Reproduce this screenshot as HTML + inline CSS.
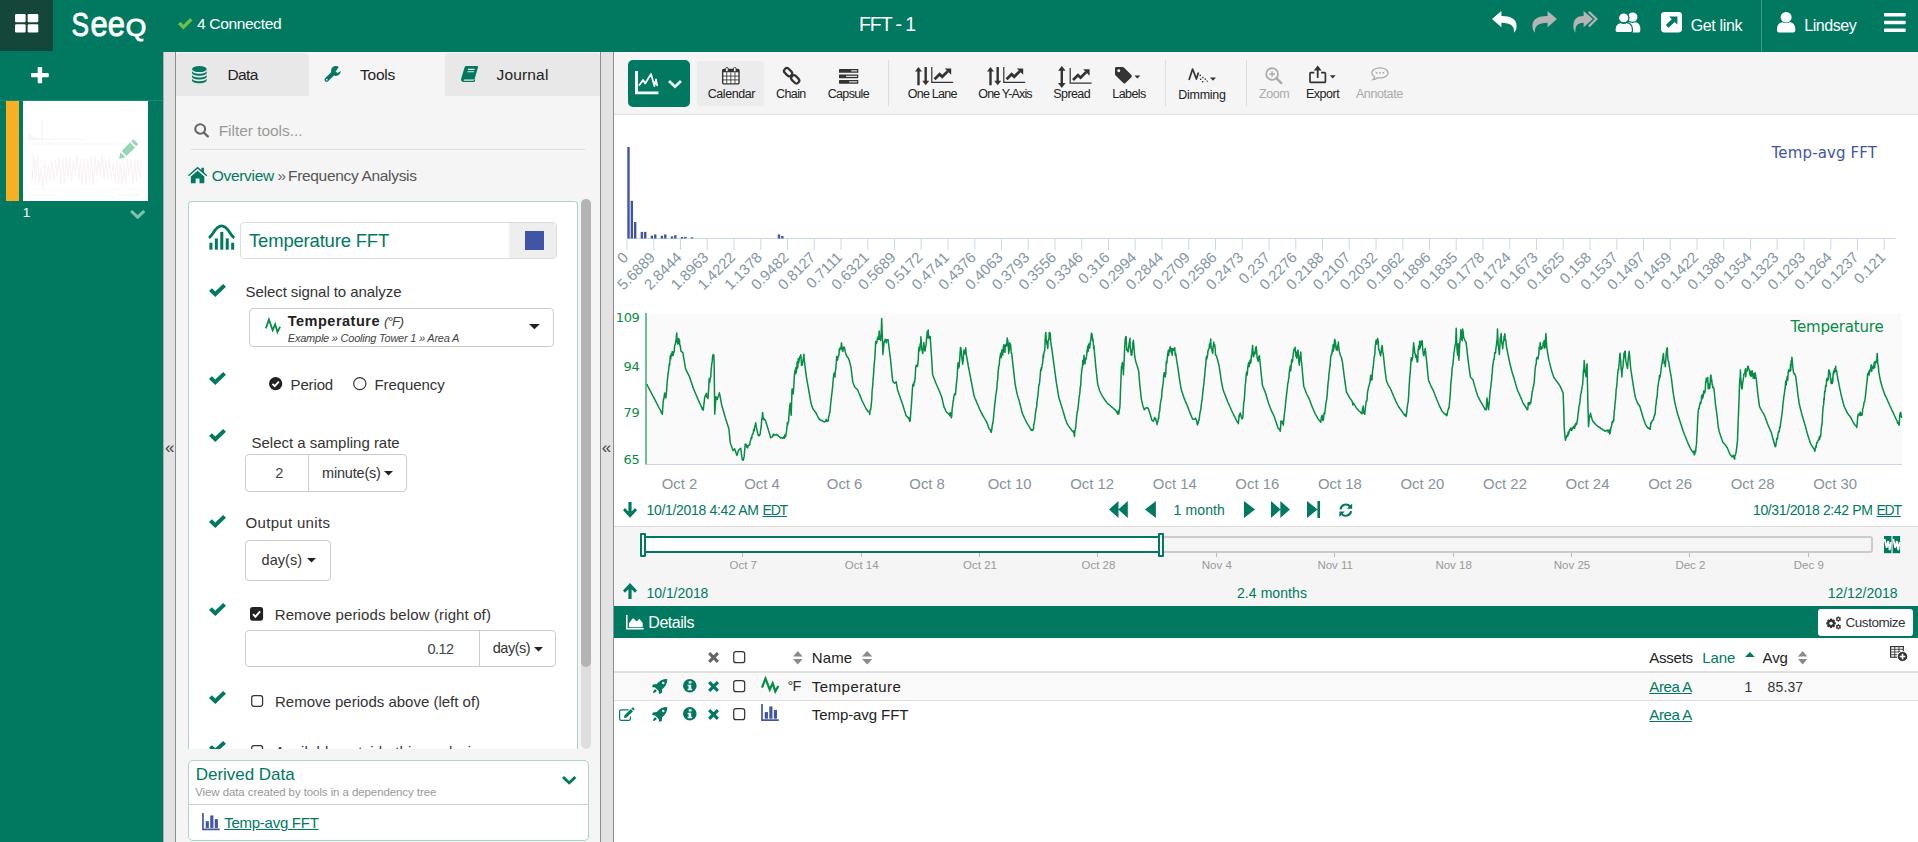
<!DOCTYPE html>
<html lang="en"><head><meta charset="utf-8"><title>FFT - 1</title>
<style>
html,body{margin:0;padding:0;background:#fff;}
body{width:1918px;height:842px;overflow:hidden;position:relative;font-family:"Liberation Sans",sans-serif;}
.b{position:absolute;box-sizing:border-box;display:block;}
.t{position:absolute;line-height:1;white-space:nowrap;display:block;}
a.t{text-decoration:underline;}
svg{overflow:visible;}
</style></head><body>
<header>
<div class="b " style="left:0px;top:0px;width:1918px;height:52px;background:#007960;"></div>
<div class="b " style="left:0px;top:0px;width:53px;height:51px;background:#15463a;"></div>
<svg class="b" style="left:14.7px;top:14.2px;" width="23.3" height="18.6" viewBox="0 0 23 19" preserveAspectRatio="none"><g fill="#fff"><rect x="0" y="0" width="10.5" height="8.5" rx="1.3"/><rect x="12.5" y="0" width="10.5" height="8.5" rx="1.3"/><rect x="0" y="10.5" width="10.5" height="8.5" rx="1.3"/><rect x="12.5" y="10.5" width="10.5" height="8.5" rx="1.3"/></g></svg>
<svg class="b" style="left:70px;top:8px" width="84" height="36" viewBox="70 8 84 36" font-family="Liberation Sans, sans-serif" fill="#fff" stroke="#fff" stroke-width=".9"><text x="71.5" y="36" font-size="33" textLength="17.5" lengthAdjust="spacingAndGlyphs">S</text><text x="90.5" y="36" font-size="35" textLength="34.5" lengthAdjust="spacingAndGlyphs">ee</text><text x="125.8" y="36.3" font-size="23.5" textLength="20.5" lengthAdjust="spacingAndGlyphs">Q</text></svg>
<svg class="b" style="left:178.3px;top:17.6px;" width="14.6" height="11.6" viewBox="0 0 16 13" preserveAspectRatio="none"><path fill="#6cc04a" d="M0,7 L2.7,4.300 L5.9,7.500 L13.3,0.100 L16,2.800 L5.9,12.900 Z"/></svg>
<span class="t " style="font-size:15.5px;color:#fff;letter-spacing:-0.33px;left:197.0px;top:16.1px;">4 Connected</span>
<span class="t " style="font-size:19.5px;color:#fff;letter-spacing:-1.08px;left:859.0px;top:14.5px;">FFT - 1</span>
<svg class="b" style="left:1492.3px;top:11.0px;" width="25.0" height="21.7" viewBox="0 0 25 22" preserveAspectRatio="none"><path fill="#fff" d="M0,8 L9.4,0 V5 C19,5 24.6,8 24.6,15.4 C24.6,18.4 23,21 22,22 C22.6,15.4 19,12 9.4,12 V16.6z"/></svg>
<svg class="b" style="left:1532.3px;top:11.0px;" width="25.0" height="21.7" viewBox="0 0 25 22" preserveAspectRatio="none"><path fill="#b5b5b5" transform="translate(25,0) scale(-1,1)" d="M0,8 L9.4,0 V5 C19,5 24.6,8 24.6,15.4 C24.6,18.4 23,21 22,22 C22.6,15.4 19,12 9.4,12 V16.6z"/></svg>
<svg class="b" style="left:1572.7px;top:11.0px;" width="25.0" height="21.7" viewBox="0 0 25 22" preserveAspectRatio="none"><g fill="#b5b5b5"><path transform="translate(20,0) scale(-1,1)" d="M0,8 L9.4,0 V5 C16,5 19.6,8 19.6,15.4 C19.6,18.4 18.4,21 17.6,22 C18,15.4 16,12 9.4,12 V16.6z"/><path d="M16.6,0 L25,8 L16.6,16.6 L15,15 L21.8,8 L15,1.6z"/></g></svg>
<svg class="b" style="left:1614.5px;top:11.7px;" width="25.3" height="20.6" viewBox="0 0 25 21" preserveAspectRatio="none"><g fill="#fff"><circle cx="17.4" cy="5.2" r="4.8"/><path d="M10,21 v-4.5 c0,-3.6 2.6,-6 5,-6 c1,.8 3.6,.8 4.8,0 c2.6,0 5.2,2.4 5.2,6 V19 a2,2 0 0 1 -2,2z"/></g><g fill="#fff" stroke="#007960" stroke-width="1.3"><circle cx="8.6" cy="6" r="5.2"/><path d="M0,21 v-3.6 c0,-4 2.8,-6.6 5.6,-6.6 c1.4,1 4.6,1 6,0 c2.8,0 5.6,2.6 5.6,6.6 V19 a2,2 0 0 1 -2,2 H2 a2,2 0 0 1 -2,-2z"/></g></svg>
<svg class="b" style="left:1660.7px;top:12.3px;" width="21.0" height="20.4" viewBox="0 0 21 21" preserveAspectRatio="none"><rect x="0" y="0" width="21" height="21" rx="3.6" fill="#fff"/><path fill="#007960" d="M8,4.6 H16.4 V13 L13.6,10.2 L7.6,16.2 L4.8,13.4 L10.8,7.4z"/></svg>
<span class="t " style="font-size:16px;color:#fff;letter-spacing:-0.33px;left:1690.7px;top:18.2px;">Get link</span>
<div class="b " style="left:1761px;top:0px;width:1px;height:52px;background:#3d9a85;"></div>
<svg class="b" style="left:1776.7px;top:12.3px;" width="18.3" height="20.4" viewBox="0 0 18 21" preserveAspectRatio="none"><g fill="#fff"><circle cx="9" cy="5.4" r="5.4"/><path d="M0,21 v-3.4 c0,-4.4 2.6,-7 5.6,-7 c1.6,1.2 5.2,1.2 6.8,0 c3,0 5.6,2.6 5.6,7 V19 a2,2 0 0 1 -2,2 H2 a2,2 0 0 1 -2,-2z"/></g></svg>
<span class="t " style="font-size:16px;color:#fff;letter-spacing:-0.45px;left:1804.2px;top:18.2px;">Lindsey</span>
<svg class="b" style="left:1883.7px;top:12.7px;" width="21.7" height="19.0" viewBox="0 0 22 19" preserveAspectRatio="none"><g fill="#fff"><rect x="0" y="0" width="22" height="3.6" rx=".8"/><rect x="0" y="7.7" width="22" height="3.6" rx=".8"/><rect x="0" y="15.4" width="22" height="3.6" rx=".8"/></g></svg>
</header>
<nav>
<div class="b " style="left:0px;top:52px;width:163px;height:790px;background:#007960;"></div>
<svg class="b" style="left:31.0px;top:67.0px;" width="17.8" height="16.3" viewBox="0 0 16 16" preserveAspectRatio="none"><g fill="#fff"><rect x="6" y="0" width="4" height="16" rx="1"/><rect x="0" y="6" width="16" height="4" rx="1"/></g></svg>
<div class="b " style="left:0px;top:100px;width:163px;height:1px;background:#1f8a73;"></div>
<div class="b " style="left:6px;top:101px;width:13px;height:100px;background:#f8b023;"></div>
<div class="b " style="left:23px;top:101px;width:125px;height:100px;background:#fff;"></div>
<svg class="b" style="left:22.8px;top:101px" width="125" height="99" viewBox="0 0 125 99"><g fill="none" opacity=".19"><path d="M5,38.500 H62" stroke="#c9cde6" stroke-width="1"/><path d="M19,38 V19 M6,38 V32 M7.500,38 V33 M9,38 V35 M11,38 V36 M14,38 V36 M32,38 V36" stroke="#aeb6dd" stroke-width="1"/><path d="M4,42.500 H116" stroke="#d9dde3" stroke-width="3" stroke-dasharray="1.200 1.200"/><path d="M9,50 V88 H118" stroke="#e6e6ee" stroke-width="1"/><path d="M9.0,79.4 L10.8,53.9 L12.6,80.0 L14.4,55.0 L16.2,80.7 L18.0,67.0 L19.8,88.4 L21.6,62.1 L23.4,82.3 L25.2,64.1 L27.0,78.7 L28.8,60.0 L30.6,78.8 L32.4,58.7 L34.2,75.5 L36.0,57.1 L37.8,82.7 L39.6,57.1 L41.4,81.4 L43.2,56.2 L45.0,74.6 L46.8,57.4 L48.6,79.9 L50.4,58.1 L52.2,74.3 L54.0,54.4 L55.8,78.7 L57.6,58.9 L59.4,82.8 L61.2,57.8 L63.0,83.2 L64.8,57.7 L66.6,82.0 L68.4,55.2 L70.2,83.4 L72.0,55.6 L73.8,75.0 L75.6,59.0 L77.4,76.2 L79.2,53.1 L81.0,78.4 L82.8,59.7 L84.6,77.0 L86.4,57.0 L88.2,77.9 L90.0,62.1 L91.8,79.9 L93.6,60.8 L95.4,83.0 L97.2,62.7 L99.0,83.3 L100.8,63.5 L102.6,83.9 L104.4,58.9 L106.2,75.6 L108.0,57.4 L109.8,83.6 L111.6,58.9 L113.4,79.7 L115.2,59.2 L117.0,76.1 L118.8,57.7" stroke="#e8b7d0" stroke-width="1"/><path d="M10,94 H32 M94,94 H118 M98,9.500 H114" stroke="#dfe2ea" stroke-width="1.500"/></g></svg>
<svg class="b" style="left:118.8px;top:139.8px;" width="18.5" height="18.8" viewBox="0 0 18 18" preserveAspectRatio="none"><g fill="#96d6b4"><path d="M0,18 L1.500,11.700 L6.300,16.500z"/><path d="M2.600,10.600 L10.800,2.400 L15.600,7.200 L7.400,15.400z"/><path d="M11.900,1.300 L13,.2 a1.400,1.400 0 0 1 2,0 L17.800,3 a1.400,1.400 0 0 1 0,2 L16.700,6.100z"/></g></svg>
<span class="t " style="font-size:13.5px;color:#fff;left:22.8px;top:206.3px;">1</span>
<svg class="b" style="left:130.4px;top:210.0px;" width="15.4" height="9.2" viewBox="0 0 14 9" preserveAspectRatio="none"><path fill="#7cc2ae" d="M0,2 L2,0 L7,5 L12,0 L14,2 L7,9z"/></svg>
</nav>
<aside>
<div class="b " style="left:163px;top:52px;width:13px;height:790px;background:#e3e3e3;border-left:1px solid #adadad;border-right:1px solid #8e8e8e;"></div>
<span class="t " style="font-size:17px;color:#444;left:165.0px;top:439.3px;">«</span>
<div class="b " style="left:176px;top:52px;width:424px;height:790px;background:#f5f5f5;"></div>
<div class="b " style="left:176px;top:53px;width:132.5px;height:43px;background:#e8e8e8;border-radius:4px 4px 0 0;"></div>
<div class="b " style="left:445px;top:53px;width:154.5px;height:43px;background:#e8e8e8;border-radius:4px 4px 0 0;"></div>
<svg class="b" style="left:192.0px;top:65.8px;" width="14.7" height="16.2" viewBox="0 0 14 16" preserveAspectRatio="none"><g fill="#007960"><ellipse cx="7" cy="3" rx="7" ry="3"/><path d="M0,4.6 v2 c0,1.7 3.1,3 7,3 s7,-1.3 7,-3 v-2 c0,1.7 -3.1,3 -7,3 s-7,-1.3 -7,-3z"/><path d="M0,8.3 v2 c0,1.7 3.1,3 7,3 s7,-1.3 7,-3 v-2 c0,1.7 -3.1,3 -7,3 s-7,-1.3 -7,-3z"/><path d="M0,12 v2 c0,1.7 3.1,3 7,3 s7,-1.3 7,-3 v-2 c0,1.7 -3.1,3 -7,3 s-7,-1.3 -7,-3z"/></g></svg>
<span class="t " style="font-size:15.5px;color:#222;letter-spacing:-0.61px;left:227.5px;top:66.9px;">Data</span>
<svg class="b" style="left:324.0px;top:65.7px;" width="17.0" height="16.3" viewBox="0 0 17 16" preserveAspectRatio="none"><path d="M2.600,13.600 L10.400,5.800" stroke="#007960" stroke-width="4.200" stroke-linecap="round" fill="none"/><circle cx="11.800" cy="4.900" r="4.800" fill="#007960"/><path d="M11.600,5.400 L15.200,0.400 L18.600,3.600 L13.600,6.800z" fill="#f5f5f5"/><circle cx="2.800" cy="13.400" r="0.900" fill="#f5f5f5"/></svg>
<span class="t " style="font-size:15.5px;color:#222;letter-spacing:-0.24px;left:360.0px;top:66.9px;">Tools</span>
<svg class="b" style="left:461.0px;top:65.8px;" width="17.0" height="16.0" viewBox="0 0 17 16" preserveAspectRatio="none"><path fill="#007960" d="M5.2,0 H16 a1,1 0 0 1 1,1.3 L13.8,12.5 a1.4,1.4 0 0 1 -1.3,1 H3 a1,1 0 0 0 0,1.3 H12.6 L13,13.6 L14.3,13.8 L13.6,15.4 a1,1 0 0 1 -.9,.6 H2.6 A2.5,2.5 0 0 1 0.2,12.6 L3.6,1.2 A1.7,1.7 0 0 1 5.2,0z"/><path d="M7,3.4 H13.6 M6.4,5.8 H13" stroke="#e8e8e8" stroke-width="1.1"/></svg>
<span class="t " style="font-size:15.5px;color:#222;letter-spacing:0.17px;left:496.5px;top:66.9px;">Journal</span>
<svg class="b" style="left:194.0px;top:122.5px;" width="15.0" height="14.5" viewBox="0 0 15 15" preserveAspectRatio="none"><circle cx="6.2" cy="6.2" r="4.9" fill="none" stroke="#666" stroke-width="2.1"/><path d="M9.8,9.8 L13.8,13.8" stroke="#666" stroke-width="2.4" stroke-linecap="round"/></svg>
<span class="t " style="font-size:15.5px;color:#999;letter-spacing:-0.04px;left:218.7px;top:122.9px;">Filter tools...</span>
<div class="b " style="left:191px;top:149px;width:394px;height:1px;background:#dcdcdc;"></div>
<svg class="b" style="left:188.3px;top:166.7px;" width="19.2" height="16.3" viewBox="0 0 20 16" preserveAspectRatio="none"><path fill="#007960" d="M10,1.6 L0.9,9.1 L0,8 L10,-0.3 L14,3 V0.8 H16.6 V5.2 L20,8 L19.1,9.1z"/><path fill="#007960" d="M10,3.6 L17,9.4 V15.4 a.6,.6 0 0 1 -.6,.6 H12 V11.2 H8 V16 H3.6 a.6,.6 0 0 1 -.6,-.6 V9.4z"/></svg>
<span class="t " style="font-size:15.5px;color:#007960;letter-spacing:-0.29px;left:211.7px;top:167.9px;">Overview</span>
<span class="t " style="font-size:15.5px;color:#666;left:277.5px;top:167.9px;">»</span>
<span class="t " style="font-size:15.5px;color:#555;letter-spacing:-0.32px;left:288.0px;top:167.9px;">Frequency Analysis</span>
<div class="b " style="left:188px;top:201px;width:390px;height:548px;background:#fff;border:1px solid #a9d6cb;border-bottom:none;border-radius:4px 4px 0 0;"></div>
<div class="b " style="left:580.5px;top:198.5px;width:10px;height:550px;background:#dedede;border-radius:5px;"></div>
<div class="b " style="left:580.5px;top:198.5px;width:10px;height:468px;background:#b4b4b4;border-radius:5px;"></div>
<svg class="b" style="left:207.5px;top:224.0px;" width="27.2" height="25.7" viewBox="0 0 27 26" preserveAspectRatio="none"><path d="M.8,14 C5,12 7,2 13.500,2 S22,12 26.200,14" stroke="#007960" stroke-width="2.800" fill="none"/><g fill="#007960"><rect x="1.400" y="19" width="3" height="7"/><rect x="6.800" y="14.600" width="3" height="11.400"/><rect x="12.200" y="8" width="3" height="18"/><rect x="17.600" y="14.600" width="3" height="11.400"/><rect x="23" y="19" width="3" height="7"/></g></svg>
<div class="b " style="left:240.3px;top:222.2px;width:316.3px;height:37px;background:#fff;border:1px solid #ddd;border-radius:4px;"></div>
<div class="b " style="left:509px;top:223.2px;width:46.6px;height:35px;background:#eee;border-radius:0 3px 3px 0;"></div>
<div class="b " style="left:525.2px;top:231px;width:19px;height:19px;background:#4055A3;"></div>
<span class="t " style="font-size:18.5px;color:#007960;letter-spacing:-0.19px;left:249.0px;top:232.3px;">Temperature FFT</span>
<svg class="b" style="left:209.0px;top:283.5px;" width="17.0" height="13.0" viewBox="0 0 16 13" preserveAspectRatio="none"><path fill="#007960" d="M0,7 L2.7,4.300 L5.9,7.500 L13.3,0.100 L16,2.800 L5.9,12.900 Z"/></svg>
<span class="t " style="font-size:15px;color:#333;letter-spacing:-0.07px;left:245.5px;top:283.6px;">Select signal to analyze</span>
<div class="b " style="left:249px;top:307.5px;width:304.5px;height:39px;background:#fff;border:1px solid #ccc;border-radius:4px;"></div>
<svg class="b" style="left:265.0px;top:318.4px;" width="16.0" height="15.6" viewBox="0 0 18 16" preserveAspectRatio="none"><path d="M1,10.600 L4.400,1.600 L8.600,12.600 L11.400,6.400 L14,14.400 L17,9" stroke="#068C45" stroke-width="2" fill="none" stroke-linejoin="miter"/></svg>
<span class="t " style="font-size:14.5px;color:#222;font-weight:bold;letter-spacing:0.49px;left:287.8px;top:314.3px;">Temperature</span>
<span class="t " style="font-size:13.5px;color:#444;font-style:italic;letter-spacing:-0.91px;left:384.0px;top:315.2px;">(°F)</span>
<span class="t " style="font-size:11px;color:#444;font-style:italic;letter-spacing:-0.23px;left:287.8px;top:332.7px;">Example » Cooling Tower 1 » Area A</span>
<svg class="b" style="left:529.3px;top:323.8px;" width="10.9" height="5.2" viewBox="0 0 10 5" preserveAspectRatio="none"><path fill="#222" d="M0,0 H10 L5,5z"/></svg>
<svg class="b" style="left:209.0px;top:372.0px;" width="17.0" height="13.0" viewBox="0 0 16 13" preserveAspectRatio="none"><path fill="#007960" d="M0,7 L2.7,4.300 L5.9,7.500 L13.3,0.100 L16,2.800 L5.9,12.900 Z"/></svg>
<svg class="b" style="left:268.7px;top:377.4px;" width="13.3" height="13.3" viewBox="0 0 14 14" preserveAspectRatio="none"><circle cx="7" cy="7" r="7" fill="#222"/><path d="M3.600,7.200 L6,9.600 L10.400,4.800" stroke="#fff" stroke-width="1.900" fill="none"/></svg>
<span class="t " style="font-size:15px;color:#333;letter-spacing:-0.16px;left:290.6px;top:377.0px;">Period</span>
<svg class="b" style="left:352.6px;top:377.4px;" width="13.6" height="13.3" viewBox="0 0 14 14" preserveAspectRatio="none"><circle cx="7" cy="7" r="6.300" fill="#fff" stroke="#333" stroke-width="1.200"/></svg>
<span class="t " style="font-size:15px;color:#333;letter-spacing:-0.07px;left:374.4px;top:377.0px;">Frequency</span>
<svg class="b" style="left:209.0px;top:428.7px;" width="17.0" height="13.0" viewBox="0 0 16 13" preserveAspectRatio="none"><path fill="#007960" d="M0,7 L2.7,4.300 L5.9,7.500 L13.3,0.100 L16,2.800 L5.9,12.900 Z"/></svg>
<span class="t " style="font-size:15px;color:#333;letter-spacing:-0.01px;left:251.5px;top:435.0px;">Select a sampling rate</span>
<div class="b " style="left:245.2px;top:454px;width:161.4px;height:38px;background:#fff;border:1px solid #ccc;border-radius:4px;"></div>
<div class="b " style="left:308px;top:454px;width:1px;height:38px;background:#ccc;"></div>
<span class="t " style="font-size:14.5px;color:#444;left:275.2px;top:466.0px;">2</span>
<span class="t " style="font-size:14.5px;color:#333;letter-spacing:-0.19px;left:322.0px;top:465.7px;">minute(s)</span>
<svg class="b" style="left:383.5px;top:470.5px;" width="9.0" height="4.6" viewBox="0 0 10 5" preserveAspectRatio="none"><path fill="#222" d="M0,0 H10 L5,5z"/></svg>
<svg class="b" style="left:209.0px;top:514.5px;" width="17.0" height="13.0" viewBox="0 0 16 13" preserveAspectRatio="none"><path fill="#007960" d="M0,7 L2.7,4.300 L5.9,7.500 L13.3,0.100 L16,2.800 L5.9,12.900 Z"/></svg>
<span class="t " style="font-size:15px;color:#333;letter-spacing:0.32px;left:245.5px;top:515.3px;">Output units</span>
<div class="b " style="left:245.2px;top:540px;width:86.3px;height:41px;background:#fff;border:1px solid #ccc;border-radius:4px;"></div>
<span class="t " style="font-size:14.5px;color:#333;letter-spacing:0.02px;left:261.6px;top:553.2px;">day(s)</span>
<svg class="b" style="left:306.5px;top:558.0px;" width="9.0" height="4.6" viewBox="0 0 10 5" preserveAspectRatio="none"><path fill="#222" d="M0,0 H10 L5,5z"/></svg>
<svg class="b" style="left:209.0px;top:602.5px;" width="17.0" height="13.0" viewBox="0 0 16 13" preserveAspectRatio="none"><path fill="#007960" d="M0,7 L2.7,4.300 L5.9,7.500 L13.3,0.100 L16,2.800 L5.9,12.900 Z"/></svg>
<svg class="b" style="left:250.1px;top:607.2px;" width="13.1" height="13.7" viewBox="0 0 13 13" preserveAspectRatio="none"><rect x="0" y="0" width="13" height="13" rx="2.6" fill="#222"/><path d="M3,6.8 L5.400,9.200 L10,4.200" stroke="#fff" stroke-width="1.9" fill="none"/></svg>
<span class="t " style="font-size:15px;color:#333;letter-spacing:0.12px;left:274.7px;top:606.6px;">Remove periods below (right of)</span>
<div class="b " style="left:245.2px;top:630px;width:311px;height:36.7px;background:#fff;border:1px solid #ccc;border-radius:4px;"></div>
<div class="b " style="left:479.2px;top:630px;width:1px;height:36.7px;background:#ccc;"></div>
<span class="t " style="font-size:14.5px;color:#444;letter-spacing:-0.56px;left:427.5px;top:641.7px;">0.12</span>
<span class="t " style="font-size:14.5px;color:#333;letter-spacing:-0.51px;left:492.8px;top:641.2px;">day(s)</span>
<svg class="b" style="left:533.5px;top:646.5px;" width="9.0" height="4.6" viewBox="0 0 10 5" preserveAspectRatio="none"><path fill="#222" d="M0,0 H10 L5,5z"/></svg>
<svg class="b" style="left:209.0px;top:690.5px;" width="17.0" height="13.0" viewBox="0 0 16 13" preserveAspectRatio="none"><path fill="#007960" d="M0,7 L2.7,4.300 L5.9,7.500 L13.3,0.100 L16,2.800 L5.9,12.900 Z"/></svg>
<svg class="b" style="left:250.6px;top:695.0px;" width="12.3" height="12.0" viewBox="0 0 13 13" preserveAspectRatio="none"><rect x=".75" y=".75" width="11.5" height="11.5" rx="2.4" fill="#fff" stroke="#333" stroke-width="1.3"/></svg>
<span class="t " style="font-size:15px;color:#333;letter-spacing:0.00px;left:275.0px;top:694.1px;">Remove periods above (left of)</span>
<div class="b" style="left:189px;top:735px;width:388px;height:13.500px;overflow:hidden">
<svg class="b" style="left:20.0px;top:5.5px;" width="17.0" height="12.6" viewBox="0 0 16 13" preserveAspectRatio="none"><path fill="#007960" d="M0,7 L2.7,4.300 L5.9,7.500 L13.3,0.100 L16,2.800 L5.9,12.900 Z"/></svg>
<svg class="b" style="left:61.6px;top:9.5px;" width="12.3" height="12.0" viewBox="0 0 13 13" preserveAspectRatio="none"><rect x=".75" y=".75" width="11.5" height="11.5" rx="2.4" fill="#fff" stroke="#333" stroke-width="1.3"/></svg>
<span class="t " style="font-size:15px;color:#333;letter-spacing:0.16px;left:86.0px;top:8.8px;">Available outside this analysis</span>
</div>
<div class="b " style="left:188.4px;top:760.4px;width:400.2px;height:81px;background:#fff;border:1px solid #a9d6cb;border-radius:5px;"></div>
<div class="b " style="left:189px;top:804px;width:399px;height:1px;background:#cfcfcf;"></div>
<span class="t " style="font-size:17px;color:#007960;letter-spacing:-0.03px;left:195.8px;top:765.8px;">Derived Data</span>
<span class="t " style="font-size:11.5px;color:#999;letter-spacing:-0.09px;left:195.2px;top:786.7px;">View data created by tools in a dependency tree</span>
<svg class="b" style="left:562.3px;top:776.0px;" width="14.4" height="8.8" viewBox="0 0 14 9" preserveAspectRatio="none"><path fill="#007960" d="M0,2 L2,0 L7,5 L12,0 L14,2 L7,9z"/></svg>
<svg class="b" style="left:201.5px;top:813.3px;" width="17.7" height="17.4" viewBox="0 0 18 17" preserveAspectRatio="none"><path d="M1,0 V16 H18" stroke="#4055A3" stroke-width="1.700" fill="none"/><g fill="#4055A3"><rect x="3.800" y="8" width="3.200" height="6.600"/><rect x="8.400" y="2.400" width="3.200" height="12.200"/><rect x="13" y="6" width="3.200" height="8.600"/></g></svg>
<a class="t " style="font-size:15px;color:#007960;letter-spacing:-0.26px;left:224.2px;top:815.4px;">Temp-avg FFT</a>
<div class="b " style="left:599.5px;top:52px;width:14.5px;height:790px;background:#e3e3e3;border-left:1px solid #8e8e8e;border-right:1px solid #8e8e8e;"></div>
<span class="t " style="font-size:17px;color:#444;left:601.8px;top:439.3px;">«</span>
</aside>
<main>
<div class="b " style="left:614px;top:52px;width:1304px;height:63px;background:#f5f5f5;border-bottom:1px solid #ddd;"></div>
<div class="b " style="left:628.3px;top:60px;width:61.7px;height:46.7px;background:#007960;border-radius:5px;"></div>
<svg class="b" style="left:635.0px;top:71.0px;" width="23.5" height="23.3" viewBox="0 0 24 24" preserveAspectRatio="none"><path d="M1.5,0 V22.5 H24" stroke="#fff" stroke-width="3" fill="none"/><path d="M4.500,14.500 L8.200,9.200 L10.400,12.800 L16.400,3 L19.800,15.600 L21.400,8.600 L22.600,14.800" stroke="#fff" stroke-width="1.800" fill="none" stroke-linejoin="round" stroke-linecap="round"/></svg>
<svg class="b" style="left:667.5px;top:79.5px;" width="14.0" height="8.5" viewBox="0 0 14 9" preserveAspectRatio="none"><path fill="#e8f3f0" d="M0,2 L2,0 L7,5 L12,0 L14,2 L7,9z"/></svg>
<div class="b " style="left:697.3px;top:61px;width:67px;height:44.7px;background:#ececec;border-radius:3px;"></div>
<svg class="b" style="left:722.3px;top:66.7px;" width="17.7" height="17.6" viewBox="0 0 18 18" preserveAspectRatio="none"><rect x=".7" y="2.6" width="16.6" height="14.700" rx="1.2" fill="#fff" stroke="#333" stroke-width="1.400"/><rect x=".7" y="2.6" width="16.6" height="2.800" fill="#333"/><path d="M4.800,5.400 V17 M9,5.400 V17 M13.200,5.400 V17 M1,9.300 H17 M1,13.200 H17" stroke="#333" stroke-width=".9"/><rect x="3.700" y=".5" width="2.600" height="4.400" rx="1.200" fill="#fff" stroke="#333" stroke-width="1"/><rect x="11.700" y=".5" width="2.600" height="4.400" rx="1.200" fill="#fff" stroke="#333" stroke-width="1"/></svg>
<span class="t " style="font-size:12.5px;color:#222;letter-spacing:-0.43px;left:707.7px;top:88.0px;">Calendar</span>
<svg class="b" style="left:782.7px;top:66.5px;" width="17.3" height="17.5" viewBox="0 0 18 18" preserveAspectRatio="none"><g fill="none" stroke="#333" stroke-width="2.300"><rect x="-4.700" y="-2.900" width="9.400" height="5.800" rx="2.900" transform="translate(5.300,5.300) rotate(45)"/><rect x="-4.700" y="-2.900" width="9.400" height="5.800" rx="2.900" transform="translate(12.700,12.700) rotate(45)"/></g></svg>
<span class="t " style="font-size:12.5px;color:#222;letter-spacing:-0.59px;left:776.0px;top:88.0px;">Chain</span>
<svg class="b" style="left:839.0px;top:69.3px;" width="19.3" height="14.7" viewBox="0 0 19 15" preserveAspectRatio="none"><g fill="#333"><rect x="0" y="0" width="19" height="3.800" rx=".6"/><rect x="0" y="5.600" width="19" height="3.800" rx=".6"/><rect x="0" y="11.200" width="19" height="3.800" rx=".6"/></g><g fill="#e6e6e6"><rect x="12" y="1.300" width="5.800" height="1.200"/><rect x="7" y="6.900" width="10.800" height="1.200"/><rect x="10" y="12.500" width="7.800" height="1.200"/></g></svg>
<span class="t " style="font-size:12.5px;color:#222;letter-spacing:-0.65px;left:827.7px;top:88.0px;">Capsule</span>
<div class="b " style="left:888px;top:60px;width:1px;height:46px;background:#ddd;"></div>
<svg class="b" style="left:915.0px;top:67.3px;" width="38.4" height="18.3" viewBox="0 0 38.400 18.300" preserveAspectRatio="none"><g fill="#333"><path d="M3.500,0 L7,4.600 H4.700 V18.300 H2.300 V4.600 H0z"/><path d="M10.700,18.300 L7.200,13.700 H9.500 V0 H11.900 V13.700 H14.200z"/></g><g transform="translate(16.2,0)"><path d="M.6,0 V15.300 H22" stroke="#333" stroke-width="1.200" fill="none"/><path d="M3.400,12.200 L8.400,7.200 L11,9.800 L16.600,4.200" stroke="#333" stroke-width="2.700" fill="none"/><path fill="#333" d="M13.600,1.400 H20 V7.800z"/></g></svg>
<span class="t " style="font-size:12.5px;color:#222;letter-spacing:-0.74px;left:907.7px;top:88.0px;">One Lane</span>
<svg class="b" style="left:986.5px;top:67.3px;" width="38.4" height="18.3" viewBox="0 0 38.400 18.300" preserveAspectRatio="none"><g fill="#333"><path d="M3.500,0 L7,4.600 H4.700 V18.300 H2.300 V4.600 H0z"/><path d="M10.700,18.300 L7.200,13.700 H9.500 V0 H11.900 V13.700 H14.200z"/></g><g transform="translate(16.2,0)"><path d="M.6,0 V15.300 H22" stroke="#333" stroke-width="1.200" fill="none"/><path d="M3.400,12.200 L8.400,7.200 L11,9.800 L16.600,4.200" stroke="#333" stroke-width="2.700" fill="none"/><path fill="#333" d="M13.600,1.400 H20 V7.800z"/></g></svg>
<span class="t " style="font-size:12.5px;color:#222;letter-spacing:-0.84px;left:978.3px;top:88.0px;">One Y-Axis</span>
<svg class="b" style="left:1057.5px;top:65.5px;" width="33.2" height="21.9" viewBox="0 0 33.200 22" preserveAspectRatio="none"><path fill="#333" d="M3.800,0 L7.600,4.800 H5 V17.200 H7.600 L3.800,22 L0,17.200 H2.600 V4.800 H0z"/><g transform="translate(11.6,1.9)"><path d="M.6,0 V15.300 H22" stroke="#333" stroke-width="1.200" fill="none"/><path d="M3.400,12.200 L8.400,7.200 L11,9.800 L16.600,4.200" stroke="#333" stroke-width="2.700" fill="none"/><path fill="#333" d="M13.600,1.400 H20 V7.800z"/></g></svg>
<span class="t " style="font-size:12.5px;color:#222;letter-spacing:-0.60px;left:1053.3px;top:88.0px;">Spread</span>
<svg class="b" style="left:1115.0px;top:67.0px;" width="25.7" height="16.6" viewBox="0 0 26 17" preserveAspectRatio="none"><path fill="#333" d="M0,1.4 A1.4,1.4 0 0 1 1.4,0 H7.6 a2,2 0 0 1 1.4,.6 L16.6,8.2 a1.6,1.6 0 0 1 0,2.2 L10.6,16.4 a1.6,1.6 0 0 1 -2.2,0 L.6,8.6 A2,2 0 0 1 0,7.2z"/><circle cx="3.8" cy="3.8" r="1.5" fill="#f5f5f5"/><path fill="#333" d="M19.6,8.6 H25.6 L22.6,11.8z"/></svg>
<span class="t " style="font-size:12.5px;color:#222;letter-spacing:-0.57px;left:1112.3px;top:88.0px;">Labels</span>
<div class="b " style="left:1165px;top:60px;width:1px;height:46px;background:#ddd;"></div>
<svg class="b" style="left:1187.5px;top:67.5px;" width="28.0" height="15.0" viewBox="0 0 28 15" preserveAspectRatio="none"><path d="M1,12 L4.6,1 L8.4,11 L10.4,4.6" stroke="#333" stroke-width="1.7" fill="none" stroke-linejoin="round"/><g fill="#333"><rect x="11.6" y="6.6" width="1.4" height="1.4"/><rect x="14.2" y="8.8" width="1.4" height="1.4"/><rect x="12" y="10.6" width="1.4" height="1.4"/><rect x="16.6" y="10.4" width="1.4" height="1.4"/><rect x="14" y="13" width="1.4" height="1.4"/><rect x="18.6" y="12.6" width="1.2" height="1.2"/><path d="M22,9.6 H28 L25,12.8z"/></g></svg>
<span class="t " style="font-size:12.5px;color:#222;letter-spacing:-0.27px;left:1178.3px;top:89.2px;">Dimming</span>
<div class="b " style="left:1245.5px;top:60px;width:1px;height:46px;background:#ddd;"></div>
<svg class="b" style="left:1265.2px;top:67.1px;" width="17.3" height="17.1" viewBox="0 0 17 17" preserveAspectRatio="none"><circle cx="7" cy="7" r="5.8" fill="none" stroke="#aaa" stroke-width="1.7"/><path d="M11.4,11.4 L16,16" stroke="#aaa" stroke-width="2.4" stroke-linecap="round"/><path d="M4.2,7 H9.8 M7,4.2 V9.8" stroke="#aaa" stroke-width="1.4"/></svg>
<span class="t " style="font-size:12.5px;color:#aaa;letter-spacing:-0.44px;left:1259.0px;top:88.0px;">Zoom</span>
<svg class="b" style="left:1308.5px;top:66.0px;" width="26.7" height="17.5" viewBox="0 0 27 17" preserveAspectRatio="none"><path d="M5.4,6.4 H2 a1,1 0 0 0 -1,1 V15 a1,1 0 0 0 1,1 H15.6 a1,1 0 0 0 1,-1 V7.4 a1,1 0 0 0 -1,-1 H12.2" fill="none" stroke="#333" stroke-width="1.7"/><path d="M8.8,1.6 V11.6" stroke="#333" stroke-width="1.8"/><path fill="#333" d="M8.8,-.6 L12.8,4.4 H4.8z"/><path fill="#333" d="M21,9 H27 L24,12.2z"/></svg>
<span class="t " style="font-size:12.5px;color:#222;letter-spacing:-0.49px;left:1306.0px;top:88.0px;">Export</span>
<svg class="b" style="left:1370.5px;top:67.0px;" width="17.9" height="13.7" viewBox="0 0 18 14" preserveAspectRatio="none"><path d="M9,.8 c4.6,0 8.2,2.3 8.2,5.2 s-3.6,5.2 -8.2,5.2 c-.8,0 -1.6,-.1 -2.4,-.2 c-1.2,1 -2.8,1.8 -4.6,2 c.8,-.8 1.4,-1.8 1.6,-3 C1.8,9 .8,7.600 .8,6 c0,-2.900 3.600,-5.200 8.200,-5.200z" fill="none" stroke="#aaa" stroke-width="1.3"/><g fill="#aaa"><circle cx="5.6" cy="6" r="1"/><circle cx="9" cy="6" r="1"/><circle cx="12.4" cy="6" r="1"/></g></svg>
<span class="t " style="font-size:12.5px;color:#aaa;letter-spacing:-0.39px;left:1355.9px;top:88.0px;">Annotate</span>
<svg class="b" style="left:614px;top:115px" width="1304" height="195" viewBox="614 115 1304 195" font-family="Liberation Sans, sans-serif"><path d="M627,238.500 H1895.500" stroke="#ccd6eb" stroke-width="1" fill="none"/><path d="M627.0,238.500 v11.500 M653.8,238.500 v11.500 M680.5,238.500 v11.500 M707.2,238.500 v11.500 M734.0,238.500 v11.500 M760.8,238.500 v11.500 M787.5,238.500 v11.500 M814.2,238.500 v11.500 M841.0,238.500 v11.500 M867.8,238.500 v11.500 M894.5,238.500 v11.500 M921.2,238.500 v11.500 M948.0,238.500 v11.500 M974.8,238.500 v11.500 M1001.5,238.500 v11.500 M1028.2,238.500 v11.500 M1055.0,238.500 v11.500 M1081.8,238.500 v11.500 M1108.5,238.500 v11.500 M1135.2,238.500 v11.500 M1162.0,238.500 v11.500 M1188.8,238.500 v11.500 M1215.5,238.500 v11.500 M1242.2,238.500 v11.500 M1269.0,238.500 v11.500 M1295.8,238.500 v11.500 M1322.5,238.500 v11.500 M1349.2,238.500 v11.500 M1376.0,238.500 v11.500 M1402.8,238.500 v11.500 M1429.5,238.500 v11.500 M1456.2,238.500 v11.500 M1483.0,238.500 v11.500 M1509.8,238.500 v11.500 M1536.5,238.500 v11.500 M1563.2,238.500 v11.500 M1590.0,238.500 v11.500 M1616.8,238.500 v11.500 M1643.5,238.500 v11.500 M1670.2,238.500 v11.500 M1697.0,238.500 v11.500 M1723.8,238.500 v11.500 M1750.5,238.500 v11.500 M1777.2,238.500 v11.500 M1804.0,238.500 v11.500 M1830.8,238.500 v11.500 M1857.5,238.500 v11.500 M1884.2,238.500 v11.500 " stroke="#ccd6eb" stroke-width="1" fill="none"/><g fill="#4055A3"><rect x="627.30" y="147" width="2.400" height="91.5"/><rect x="630.64" y="200.8" width="2.400" height="37.7"/><rect x="633.99" y="222" width="2.400" height="16.5"/><rect x="640.67" y="231.9" width="2.400" height="6.6"/><rect x="644.02" y="231.9" width="2.400" height="6.6"/><rect x="650.71" y="235.6" width="2.400" height="2.9"/><rect x="654.05" y="234.4" width="2.400" height="4.1"/><rect x="660.74" y="235.8" width="2.400" height="2.7"/><rect x="664.08" y="234.4" width="2.400" height="4.1"/><rect x="670.77" y="236.4" width="2.400" height="2.1"/><rect x="674.11" y="235.2" width="2.400" height="3.3"/><rect x="680.80" y="237" width="2.400" height="1.5"/><rect x="684.14" y="237" width="2.400" height="1.5"/><rect x="690.83" y="237.3" width="2.400" height="1.2"/><rect x="777.77" y="234.4" width="2.400" height="4.1"/><rect x="781.11" y="236" width="2.400" height="2.5"/></g><g font-size="15" fill="#8496a6"><text transform="translate(629.2,258.3) rotate(-45)" text-anchor="end">0</text><text transform="translate(656.0,258.3) rotate(-45)" text-anchor="end">5.6889</text><text transform="translate(682.7,258.3) rotate(-45)" text-anchor="end">2.8444</text><text transform="translate(709.5,258.3) rotate(-45)" text-anchor="end">1.8963</text><text transform="translate(736.2,258.3) rotate(-45)" text-anchor="end">1.4222</text><text transform="translate(763.0,258.3) rotate(-45)" text-anchor="end">1.1378</text><text transform="translate(789.7,258.3) rotate(-45)" text-anchor="end">0.9482</text><text transform="translate(816.5,258.3) rotate(-45)" text-anchor="end">0.8127</text><text transform="translate(843.2,258.3) rotate(-45)" text-anchor="end">0.7111</text><text transform="translate(870.0,258.3) rotate(-45)" text-anchor="end">0.6321</text><text transform="translate(896.7,258.3) rotate(-45)" text-anchor="end">0.5689</text><text transform="translate(923.5,258.3) rotate(-45)" text-anchor="end">0.5172</text><text transform="translate(950.2,258.3) rotate(-45)" text-anchor="end">0.4741</text><text transform="translate(977.0,258.3) rotate(-45)" text-anchor="end">0.4376</text><text transform="translate(1003.7,258.3) rotate(-45)" text-anchor="end">0.4063</text><text transform="translate(1030.5,258.3) rotate(-45)" text-anchor="end">0.3793</text><text transform="translate(1057.2,258.3) rotate(-45)" text-anchor="end">0.3556</text><text transform="translate(1084.0,258.3) rotate(-45)" text-anchor="end">0.3346</text><text transform="translate(1110.7,258.3) rotate(-45)" text-anchor="end">0.316</text><text transform="translate(1137.5,258.3) rotate(-45)" text-anchor="end">0.2994</text><text transform="translate(1164.2,258.3) rotate(-45)" text-anchor="end">0.2844</text><text transform="translate(1191.0,258.3) rotate(-45)" text-anchor="end">0.2709</text><text transform="translate(1217.7,258.3) rotate(-45)" text-anchor="end">0.2586</text><text transform="translate(1244.5,258.3) rotate(-45)" text-anchor="end">0.2473</text><text transform="translate(1271.2,258.3) rotate(-45)" text-anchor="end">0.237</text><text transform="translate(1298.0,258.3) rotate(-45)" text-anchor="end">0.2276</text><text transform="translate(1324.7,258.3) rotate(-45)" text-anchor="end">0.2188</text><text transform="translate(1351.5,258.3) rotate(-45)" text-anchor="end">0.2107</text><text transform="translate(1378.2,258.3) rotate(-45)" text-anchor="end">0.2032</text><text transform="translate(1405.0,258.3) rotate(-45)" text-anchor="end">0.1962</text><text transform="translate(1431.7,258.3) rotate(-45)" text-anchor="end">0.1896</text><text transform="translate(1458.5,258.3) rotate(-45)" text-anchor="end">0.1835</text><text transform="translate(1485.2,258.3) rotate(-45)" text-anchor="end">0.1778</text><text transform="translate(1512.0,258.3) rotate(-45)" text-anchor="end">0.1724</text><text transform="translate(1538.7,258.3) rotate(-45)" text-anchor="end">0.1673</text><text transform="translate(1565.5,258.3) rotate(-45)" text-anchor="end">0.1625</text><text transform="translate(1592.2,258.3) rotate(-45)" text-anchor="end">0.158</text><text transform="translate(1619.0,258.3) rotate(-45)" text-anchor="end">0.1537</text><text transform="translate(1645.7,258.3) rotate(-45)" text-anchor="end">0.1497</text><text transform="translate(1672.5,258.3) rotate(-45)" text-anchor="end">0.1459</text><text transform="translate(1699.2,258.3) rotate(-45)" text-anchor="end">0.1422</text><text transform="translate(1726.0,258.3) rotate(-45)" text-anchor="end">0.1388</text><text transform="translate(1752.7,258.3) rotate(-45)" text-anchor="end">0.1354</text><text transform="translate(1779.5,258.3) rotate(-45)" text-anchor="end">0.1323</text><text transform="translate(1806.2,258.3) rotate(-45)" text-anchor="end">0.1293</text><text transform="translate(1833.0,258.3) rotate(-45)" text-anchor="end">0.1264</text><text transform="translate(1859.7,258.3) rotate(-45)" text-anchor="end">0.1237</text><text transform="translate(1886.5,258.3) rotate(-45)" text-anchor="end">0.121</text></g></svg>
<span class="t " style="font-size:15px;color:#4055A3;font-family:DejaVu Sans,Liberation Sans,sans-serif;letter-spacing:0.14px;left:1771.6px;top:146.2px;">Temp-avg FFT</span>
<svg class="b" style="left:614px;top:310px" width="1304" height="190" viewBox="614 310 1304 190" font-family="Liberation Sans, sans-serif"><rect x="646" y="313.500" width="1256" height="151" fill="#fafafa"/><path d="M646,464.500 H1902" stroke="#ccd6eb" stroke-width="1"/><path d="M646,313 V464.500" stroke="#068C45" stroke-width="1.800" opacity=".62"/><path d="M646.7,384.1 L647.2,384.9 L647.7,386.0 L648.2,386.9 L648.7,387.9 L649.2,388.9 L649.7,389.8 L650.2,390.8 L650.7,391.7 L651.2,392.7 L651.7,393.6 L652.2,394.6 L652.7,395.6 L653.2,396.5 L653.7,397.4 L654.2,398.4 L654.7,399.4 L655.2,400.4 L655.7,401.3 L656.2,402.2 L656.7,403.3 L657.2,404.1 L657.7,405.2 L658.2,406.1 L658.7,407.0 L659.2,408.0 L659.7,408.9 L660.2,409.9 L660.7,410.7 L661.2,412.2 L661.7,413.4 L662.2,413.2 L662.4,414.2 L662.7,408.5 L663.2,402.3 L663.6,398.5 L663.7,399.6 L664.2,395.9 L664.7,393.1 L665.2,396.2 L665.7,397.8 L665.8,397.9 L666.2,395.2 L666.7,389.2 L667.2,381.6 L667.7,377.5 L668.1,372.8 L668.2,373.7 L668.7,369.7 L669.2,364.3 L669.7,365.0 L670.2,356.1 L670.4,357.1 L670.7,359.1 L671.2,353.8 L671.7,355.8 L672.2,351.5 L672.7,355.6 L673.2,355.4 L673.7,351.8 L674.2,351.9 L674.7,345.0 L675.2,344.6 L675.7,342.0 L676.2,338.6 L676.7,333.0 L677.2,341.6 L677.7,344.1 L678.0,342.2 L678.2,343.6 L678.7,338.4 L679.2,342.2 L679.5,340.1 L679.7,345.3 L680.2,345.2 L680.7,349.1 L680.9,350.9 L681.2,351.4 L681.7,351.5 L682.2,352.3 L682.7,352.4 L682.8,352.6 L683.2,354.8 L683.7,358.1 L684.2,360.7 L684.7,363.7 L685.2,366.6 L685.6,368.9 L685.7,369.1 L686.2,370.1 L686.7,371.1 L687.2,372.1 L687.7,373.1 L688.2,374.1 L688.7,375.1 L689.2,376.1 L689.4,376.5 L689.7,377.4 L690.2,378.9 L690.7,380.4 L691.2,381.9 L691.7,383.4 L692.2,384.9 L692.7,386.4 L693.2,387.9 L693.7,389.1 L694.2,390.2 L694.7,391.5 L695.2,392.6 L695.7,393.8 L696.2,395.1 L696.7,396.2 L697.2,397.4 L697.7,398.6 L698.0,399.3 L698.2,399.7 L698.7,400.9 L699.2,402.0 L699.7,403.1 L700.2,404.2 L700.7,405.3 L701.2,406.4 L701.7,407.3 L702.2,409.2 L702.7,407.8 L703.2,409.0 L703.3,410.3 L703.7,406.0 L704.2,402.2 L704.6,398.1 L704.7,396.9 L705.2,396.3 L705.7,394.8 L706.2,394.7 L706.5,393.3 L706.7,396.9 L707.2,397.3 L707.7,396.8 L708.0,398.6 L708.2,395.6 L708.7,388.2 L709.2,378.5 L709.4,380.2 L709.7,382.4 L710.2,378.4 L710.7,377.3 L711.2,369.7 L711.7,364.4 L712.2,361.4 L712.7,355.6 L712.8,357.4 L713.2,354.5 L713.7,354.5 L714.1,360.8 L714.2,368.5 L714.7,414.1 L715.2,407.3 L715.7,400.5 L716.0,396.5 L716.2,397.0 L716.7,397.9 L717.2,399.6 L717.5,398.7 L717.7,398.0 L718.2,396.5 L718.7,395.2 L719.2,393.4 L719.4,392.8 L719.7,394.3 L720.2,396.9 L720.7,399.7 L721.2,402.4 L721.7,405.0 L722.2,406.8 L722.7,408.5 L723.2,410.3 L723.7,412.0 L724.2,413.8 L724.7,415.5 L725.2,417.2 L725.5,418.3 L725.7,418.9 L726.2,420.4 L726.7,422.0 L727.2,423.6 L727.7,425.1 L728.2,426.7 L728.7,428.2 L728.9,428.8 L729.2,431.8 L729.7,436.9 L730.2,442.0 L730.3,443.0 L730.7,444.1 L731.2,445.5 L731.7,446.8 L732.2,448.2 L732.7,449.5 L733.1,450.6 L733.2,450.5 L733.7,449.8 L734.2,449.2 L734.6,448.7 L734.7,449.0 L735.2,450.6 L735.7,451.9 L736.2,453.2 L736.7,455.0 L736.9,455.3 L737.2,454.7 L737.7,453.3 L738.2,451.0 L738.7,449.9 L738.8,449.9 L739.2,449.5 L739.7,449.0 L740.2,448.6 L740.7,448.3 L741.2,452.0 L741.7,455.6 L742.2,459.1 L742.7,460.1 L743.2,460.2 L743.7,458.3 L744.1,456.9 L744.2,456.5 L744.7,449.7 L745.2,444.2 L745.5,444.1 L745.7,444.0 L746.2,444.5 L746.7,447.1 L747.2,446.1 L747.4,447.7 L747.7,447.9 L748.2,445.3 L748.7,445.2 L749.2,445.2 L749.3,445.3 L749.7,444.7 L750.2,441.6 L750.7,440.3 L751.2,437.4 L751.7,438.5 L752.1,435.1 L752.2,434.9 L752.7,433.7 L753.2,433.5 L753.7,429.6 L754.2,430.8 L754.7,426.7 L755.2,425.1 L755.5,424.5 L755.7,422.7 L756.2,426.9 L756.7,429.0 L757.2,431.1 L757.7,433.3 L758.2,435.4 L758.7,435.1 L759.2,435.8 L759.7,434.9 L760.1,434.1 L760.2,433.7 L760.7,429.5 L761.2,427.0 L761.7,419.2 L762.2,418.5 L762.6,412.4 L762.7,412.9 L763.2,419.2 L763.7,417.9 L764.2,419.8 L764.5,419.5 L764.7,420.0 L765.2,420.1 L765.4,420.3 L765.7,421.3 L766.2,422.8 L766.7,424.5 L767.2,426.1 L767.7,427.8 L768.2,429.4 L768.7,431.1 L769.2,432.8 L769.7,434.4 L770.2,436.1 L770.7,437.7 L771.2,437.4 L771.7,437.3 L772.2,436.9 L772.7,436.1 L773.2,434.3 L773.7,435.4 L774.0,434.3 L774.2,435.2 L774.7,434.9 L775.2,435.1 L775.7,435.0 L776.2,434.9 L776.7,434.3 L776.8,434.6 L777.2,434.9 L777.7,435.0 L778.2,435.9 L778.7,436.4 L779.2,436.4 L779.7,437.2 L780.2,437.3 L780.6,437.7 L780.7,438.0 L781.2,438.1 L781.7,437.8 L782.2,438.2 L782.5,438.3 L782.7,438.1 L783.2,437.7 L783.7,436.8 L784.2,438.3 L784.7,435.0 L785.2,437.0 L785.7,436.2 L785.9,435.1 L786.2,433.0 L786.7,429.9 L787.2,424.9 L787.3,422.8 L787.7,424.6 L788.2,421.8 L788.7,420.8 L788.8,417.3 L789.2,412.6 L789.7,405.8 L790.1,403.8 L790.2,403.3 L790.7,408.9 L791.1,415.3 L791.2,414.5 L791.7,399.8 L792.0,389.1 L792.2,388.8 L792.7,393.9 L793.2,393.8 L793.7,388.5 L794.2,378.4 L794.7,371.1 L794.9,374.4 L795.2,372.5 L795.7,367.8 L796.2,372.9 L796.7,368.6 L796.8,367.9 L797.2,362.0 L797.7,367.9 L798.2,358.7 L798.7,363.0 L799.2,359.3 L799.7,356.8 L800.2,357.1 L800.6,356.9 L800.7,354.7 L801.2,359.1 L801.5,365.5 L801.7,364.1 L802.2,364.7 L802.5,365.0 L802.7,362.1 L803.2,359.3 L803.7,356.5 L804.0,354.2 L804.2,360.5 L804.7,362.7 L804.9,365.2 L805.2,367.5 L805.7,371.7 L806.2,375.3 L806.3,376.4 L806.7,378.5 L807.2,381.7 L807.7,384.4 L808.2,387.2 L808.7,390.1 L809.2,393.0 L809.7,395.7 L810.2,398.6 L810.7,401.4 L811.0,403.1 L811.2,403.7 L811.7,405.2 L812.2,406.7 L812.7,408.2 L812.9,408.8 L813.2,409.2 L813.7,409.9 L814.2,410.5 L814.7,411.2 L815.2,411.8 L815.7,412.5 L815.8,412.6 L816.2,413.4 L816.7,414.4 L817.2,415.5 L817.7,416.4 L818.2,417.5 L818.6,418.3 L818.7,418.4 L819.2,418.9 L819.7,419.4 L820.2,419.9 L820.5,420.2 L820.7,420.2 L821.2,420.5 L821.7,420.5 L822.2,420.8 L822.7,420.9 L823.2,421.5 L823.7,421.7 L824.2,421.7 L824.3,421.6 L824.7,421.9 L825.2,421.5 L825.7,421.4 L826.2,419.3 L826.7,420.9 L827.2,421.2 L827.7,421.3 L828.1,420.4 L828.2,420.8 L828.7,416.3 L829.2,415.2 L829.7,412.2 L830.0,412.3 L830.2,408.6 L830.7,403.5 L831.2,399.7 L831.7,394.4 L831.9,393.8 L832.2,390.4 L832.7,385.9 L833.2,380.0 L833.7,374.9 L833.8,373.9 L834.2,373.1 L834.7,374.1 L835.0,376.9 L835.2,371.7 L835.7,369.6 L836.2,364.0 L836.7,356.5 L837.2,360.2 L837.7,359.5 L838.2,356.2 L838.7,355.8 L839.1,353.7 L839.2,349.1 L839.7,350.2 L840.2,347.7 L840.7,349.0 L841.2,346.2 L841.4,343.0 L841.7,344.0 L842.2,349.8 L842.7,351.2 L842.9,351.5 L843.2,349.1 L843.7,347.1 L844.2,347.1 L844.3,348.3 L844.7,348.2 L845.2,351.7 L845.7,353.2 L846.2,354.9 L846.7,355.8 L847.2,356.7 L847.7,357.4 L848.2,357.9 L848.7,359.2 L849.0,359.6 L849.2,360.2 L849.7,362.2 L850.2,364.3 L850.7,366.0 L850.9,367.0 L851.2,369.3 L851.7,373.4 L852.2,377.4 L852.7,381.4 L852.8,382.2 L853.2,383.2 L853.7,384.5 L854.2,385.7 L854.7,387.0 L855.2,387.5 L855.7,388.0 L856.2,388.5 L856.7,388.9 L857.2,389.4 L857.6,389.8 L857.7,390.0 L858.2,391.2 L858.7,392.5 L859.2,393.7 L859.7,394.9 L860.2,396.1 L860.7,397.3 L861.2,398.5 L861.7,399.8 L862.2,401.0 L862.3,401.2 L862.7,402.0 L863.2,403.0 L863.7,404.0 L864.2,405.0 L864.7,406.0 L865.2,407.0 L865.7,408.0 L866.1,408.8 L866.2,409.0 L866.7,409.5 L867.2,410.2 L867.7,411.0 L868.2,411.7 L868.7,411.8 L869.2,411.6 L869.5,412.2 L869.7,414.4 L870.2,409.6 L870.7,409.8 L870.9,407.9 L871.2,404.9 L871.7,400.0 L872.2,389.7 L872.7,386.0 L873.2,377.9 L873.3,377.5 L873.7,372.1 L874.2,363.4 L874.7,360.0 L875.2,351.3 L875.6,343.8 L875.7,341.6 L876.2,343.6 L876.7,342.8 L877.2,339.8 L877.5,337.9 L877.7,338.3 L878.2,336.6 L878.7,339.4 L879.2,331.0 L879.4,335.2 L879.7,339.2 L880.2,337.7 L880.6,340.6 L880.7,338.7 L881.2,332.8 L881.7,318.6 L882.2,333.3 L882.7,347.4 L882.9,354.4 L883.2,351.1 L883.7,346.0 L884.2,341.5 L884.7,341.1 L885.2,339.3 L885.7,339.4 L886.2,342.8 L886.7,340.1 L887.2,340.3 L887.7,339.6 L888.0,339.5 L888.2,341.2 L888.7,344.8 L889.2,349.0 L889.7,353.2 L890.2,357.1 L890.5,359.4 L890.7,361.4 L891.2,366.4 L891.7,371.4 L892.2,376.3 L892.7,381.3 L893.2,381.8 L893.7,382.3 L894.2,382.8 L894.6,383.2 L894.7,383.1 L895.2,382.7 L895.7,382.2 L896.2,381.8 L896.7,384.8 L897.2,388.0 L897.5,389.8 L897.7,390.3 L898.2,391.8 L898.7,393.2 L899.2,394.6 L899.7,396.0 L900.2,397.4 L900.7,398.9 L901.2,400.3 L901.7,401.7 L902.2,403.1 L902.7,404.7 L903.2,406.4 L903.7,408.0 L904.2,409.6 L904.7,411.3 L905.2,412.9 L905.7,414.5 L906.0,415.5 L906.2,415.7 L906.7,416.2 L907.2,416.8 L907.7,417.4 L908.2,417.8 L908.7,417.5 L909.2,419.4 L909.7,421.3 L910.2,420.9 L910.7,413.5 L911.2,407.2 L911.4,405.1 L911.7,400.1 L912.2,392.6 L912.7,384.8 L913.2,384.0 L913.7,386.1 L914.2,381.4 L914.6,382.2 L914.7,381.6 L915.2,376.8 L915.7,368.0 L915.9,366.3 L916.2,365.3 L916.7,365.5 L917.2,365.1 L917.4,366.6 L917.7,364.6 L918.2,360.7 L918.7,349.1 L919.2,347.0 L919.3,349.9 L919.7,350.6 L920.2,344.3 L920.7,342.6 L920.9,336.8 L921.2,341.6 L921.7,349.5 L922.2,350.3 L922.7,353.5 L922.8,353.4 L923.2,348.5 L923.7,343.8 L923.9,342.6 L924.2,346.6 L924.7,349.8 L925.0,351.0 L925.2,350.0 L925.7,346.2 L926.2,344.1 L926.6,337.7 L926.7,339.0 L927.2,331.6 L927.7,337.8 L928.2,329.9 L928.3,333.1 L928.7,336.7 L929.2,338.6 L929.7,336.4 L930.2,336.4 L930.7,344.5 L931.2,352.0 L931.7,359.3 L932.2,367.8 L932.6,374.6 L932.7,374.9 L933.2,376.2 L933.7,377.5 L934.2,378.8 L934.7,380.1 L935.2,381.4 L935.5,382.2 L935.7,382.7 L936.2,383.8 L936.7,385.0 L937.2,386.0 L937.7,387.2 L938.2,388.3 L938.7,389.5 L939.2,390.6 L939.3,390.8 L939.7,391.8 L940.2,393.2 L940.7,394.5 L941.2,395.8 L941.7,397.1 L941.8,397.4 L942.2,399.2 L942.7,401.3 L943.2,403.4 L943.7,405.6 L944.0,406.9 L944.2,407.3 L944.7,408.3 L945.2,409.4 L945.7,410.5 L946.2,411.5 L946.3,411.7 L946.7,412.1 L947.2,412.5 L947.7,413.1 L948.2,413.5 L948.7,414.0 L948.8,414.1 L949.2,413.8 L949.7,415.7 L950.1,413.6 L950.2,412.5 L950.7,414.3 L951.2,416.7 L951.3,417.8 L951.7,416.1 L952.2,408.4 L952.7,405.4 L953.2,400.5 L953.5,400.6 L953.7,397.1 L954.2,395.2 L954.7,393.8 L955.2,393.7 L955.4,394.7 L955.7,391.9 L956.2,385.6 L956.7,381.2 L957.2,375.9 L957.7,366.3 L958.1,362.8 L958.2,368.0 L958.7,367.9 L959.0,364.7 L959.2,366.8 L959.7,358.5 L960.2,352.0 L960.5,347.4 L960.7,347.6 L961.2,350.3 L961.7,357.5 L962.2,359.8 L962.7,364.3 L962.8,360.8 L963.2,361.3 L963.7,351.4 L963.9,350.3 L964.2,354.2 L964.7,353.9 L965.2,350.5 L965.7,347.8 L966.2,354.1 L966.7,356.9 L967.0,358.8 L967.2,359.6 L967.7,362.5 L968.2,365.7 L968.5,366.9 L968.7,368.0 L969.2,370.9 L969.7,373.4 L970.2,375.7 L970.7,378.4 L971.2,381.1 L971.4,382.2 L971.7,383.7 L972.2,386.3 L972.7,388.9 L973.2,391.4 L973.7,393.9 L974.2,396.5 L974.7,397.6 L975.2,398.8 L975.7,399.9 L976.2,401.0 L976.7,402.2 L977.1,403.1 L977.2,403.4 L977.7,404.6 L978.2,405.7 L978.7,407.0 L979.2,408.1 L979.7,409.3 L979.9,409.8 L980.2,410.4 L980.7,411.4 L981.2,412.3 L981.7,413.3 L982.2,414.3 L982.7,415.3 L982.8,415.5 L983.2,416.1 L983.7,417.0 L984.2,417.9 L984.7,418.7 L985.2,419.6 L985.6,420.2 L985.7,420.4 L986.2,421.4 L986.7,422.4 L987.2,423.4 L987.5,424.0 L987.7,424.6 L988.2,426.3 L988.7,427.8 L989.0,428.8 L989.2,428.9 L989.7,429.2 L990.2,429.4 L990.5,431.0 L990.7,431.6 L991.2,432.4 L991.7,430.1 L992.2,425.8 L992.7,422.8 L992.8,424.0 L993.2,421.1 L993.7,415.2 L994.2,410.0 L994.7,405.3 L995.2,401.1 L995.7,396.0 L996.2,392.9 L996.7,389.7 L997.0,386.4 L997.2,382.1 L997.7,379.7 L998.2,371.0 L998.5,369.2 L998.7,366.3 L999.2,365.4 L999.7,358.5 L999.9,357.3 L1000.2,356.0 L1000.7,353.2 L1001.2,357.7 L1001.7,353.1 L1001.8,350.1 L1002.2,350.0 L1002.7,354.9 L1003.2,348.8 L1003.7,344.8 L1004.2,351.8 L1004.7,351.1 L1005.0,352.3 L1005.2,344.9 L1005.7,345.4 L1006.1,344.0 L1006.2,345.9 L1006.7,346.2 L1007.2,337.9 L1007.5,340.5 L1007.7,339.9 L1008.2,344.2 L1008.7,353.4 L1008.8,350.3 L1009.2,351.0 L1009.7,342.7 L1009.9,343.3 L1010.2,343.8 L1010.7,345.6 L1011.2,352.8 L1011.3,352.7 L1011.7,353.3 L1012.2,358.2 L1012.7,362.7 L1013.2,366.9 L1013.7,371.4 L1014.2,375.9 L1014.7,380.5 L1015.1,384.1 L1015.2,384.6 L1015.7,387.1 L1016.2,389.6 L1016.7,392.1 L1017.0,393.6 L1017.2,394.3 L1017.7,395.9 L1018.2,397.7 L1018.7,399.3 L1019.2,401.1 L1019.7,402.8 L1019.8,403.1 L1020.2,404.7 L1020.7,406.8 L1021.2,408.9 L1021.7,411.0 L1022.1,412.6 L1022.2,412.8 L1022.7,414.0 L1023.2,415.1 L1023.7,416.2 L1024.2,417.4 L1024.6,418.3 L1024.7,418.5 L1025.2,419.5 L1025.7,420.5 L1026.2,421.5 L1026.7,422.5 L1027.0,423.1 L1027.2,423.4 L1027.7,424.2 L1028.2,425.1 L1028.7,425.9 L1029.2,426.7 L1029.3,426.9 L1029.7,427.6 L1030.2,428.6 L1030.7,429.5 L1030.8,429.8 L1031.2,430.2 L1031.7,429.4 L1032.2,430.3 L1032.7,430.4 L1033.2,429.3 L1033.5,428.9 L1033.7,424.7 L1034.2,423.9 L1034.7,419.6 L1035.0,418.3 L1035.2,415.1 L1035.7,411.7 L1036.2,408.8 L1036.7,406.6 L1036.9,402.1 L1037.2,400.4 L1037.7,397.2 L1038.2,393.5 L1038.7,385.6 L1038.8,385.0 L1039.2,385.0 L1039.7,381.4 L1040.2,375.5 L1040.7,369.5 L1041.1,370.4 L1041.2,367.7 L1041.7,368.5 L1042.2,364.0 L1042.7,363.1 L1043.2,354.7 L1043.6,357.6 L1043.7,354.3 L1044.2,351.3 L1044.7,350.9 L1044.9,347.2 L1045.2,339.1 L1045.7,332.5 L1045.8,332.6 L1046.2,338.9 L1046.7,342.8 L1047.0,344.3 L1047.2,344.6 L1047.7,348.5 L1047.9,346.6 L1048.2,340.1 L1048.7,340.1 L1049.1,337.0 L1049.2,332.6 L1049.7,338.8 L1050.2,333.0 L1050.7,341.0 L1051.2,345.1 L1051.7,348.2 L1052.2,351.7 L1052.7,355.5 L1053.2,359.2 L1053.7,362.8 L1054.0,365.1 L1054.2,366.6 L1054.7,370.3 L1055.2,373.9 L1055.7,377.8 L1056.2,381.5 L1056.3,382.2 L1056.7,384.7 L1057.2,387.7 L1057.7,390.7 L1058.2,393.7 L1058.7,396.8 L1058.8,397.4 L1059.2,398.6 L1059.7,400.2 L1060.2,401.8 L1060.7,403.4 L1061.2,405.0 L1061.7,406.6 L1062.2,408.3 L1062.7,409.9 L1063.2,411.6 L1063.5,412.6 L1063.7,413.3 L1064.2,415.0 L1064.7,416.8 L1065.2,418.6 L1065.4,419.3 L1065.7,420.0 L1066.2,421.3 L1066.7,422.6 L1067.2,423.8 L1067.3,424.0 L1067.7,424.6 L1068.2,425.4 L1068.7,426.1 L1069.2,426.9 L1069.7,427.7 L1069.8,427.8 L1070.2,428.3 L1070.7,429.0 L1071.2,429.5 L1071.7,430.2 L1072.1,430.7 L1072.2,430.7 L1072.7,431.4 L1073.2,431.3 L1073.4,432.4 L1073.7,431.1 L1074.2,434.4 L1074.5,436.5 L1074.7,432.8 L1075.2,429.9 L1075.7,427.8 L1076.2,421.8 L1076.7,415.4 L1076.8,415.6 L1077.2,411.7 L1077.7,411.1 L1078.2,406.0 L1078.7,402.2 L1079.2,395.7 L1079.7,394.5 L1080.2,387.5 L1080.6,386.1 L1080.7,385.1 L1081.2,376.2 L1081.6,372.2 L1081.7,370.5 L1082.2,367.6 L1082.5,366.9 L1082.7,360.5 L1083.2,364.8 L1083.7,359.2 L1084.0,355.2 L1084.2,359.8 L1084.7,359.2 L1085.0,363.9 L1085.2,361.0 L1085.7,358.3 L1086.2,358.9 L1086.7,354.1 L1087.2,349.5 L1087.3,352.3 L1087.7,346.2 L1088.2,351.3 L1088.7,344.0 L1089.2,344.5 L1089.7,348.1 L1090.2,342.1 L1090.7,341.2 L1091.2,335.6 L1091.4,333.3 L1091.7,333.3 L1092.2,335.5 L1092.7,340.5 L1093.0,339.2 L1093.2,342.0 L1093.7,348.8 L1093.9,345.5 L1094.2,349.3 L1094.7,355.2 L1095.2,360.0 L1095.7,365.6 L1095.8,367.0 L1096.2,370.5 L1096.7,375.1 L1097.2,379.6 L1097.7,384.1 L1098.2,385.9 L1098.7,387.6 L1099.2,389.4 L1099.6,390.8 L1099.7,391.0 L1100.2,392.0 L1100.7,393.0 L1101.2,394.0 L1101.5,394.6 L1101.7,394.9 L1102.2,395.8 L1102.7,396.6 L1103.2,397.3 L1103.7,398.1 L1104.2,398.9 L1104.4,399.3 L1104.7,399.7 L1105.2,400.4 L1105.7,401.1 L1106.2,401.7 L1106.7,402.5 L1107.2,403.1 L1107.7,403.5 L1108.2,404.0 L1108.7,404.3 L1109.2,404.8 L1109.7,405.2 L1110.2,405.6 L1110.6,406.0 L1110.7,406.1 L1111.2,406.5 L1111.7,406.9 L1112.2,407.4 L1112.7,407.7 L1113.2,408.2 L1113.7,408.6 L1113.9,408.8 L1114.2,409.1 L1114.7,409.6 L1115.2,410.1 L1115.7,410.6 L1115.8,410.7 L1116.2,411.0 L1116.7,412.3 L1117.2,413.0 L1117.7,414.2 L1118.2,410.9 L1118.7,414.0 L1119.0,412.8 L1119.2,410.6 L1119.7,408.2 L1120.0,404.9 L1120.2,398.7 L1120.7,385.5 L1120.9,381.5 L1121.2,372.6 L1121.5,366.5 L1121.7,367.0 L1122.2,363.7 L1122.4,362.6 L1122.7,366.4 L1123.2,370.9 L1123.4,374.7 L1123.7,367.7 L1124.2,359.3 L1124.7,347.3 L1125.2,339.4 L1125.7,337.1 L1125.8,336.4 L1126.2,337.2 L1126.7,350.3 L1127.0,348.7 L1127.2,350.1 L1127.7,350.9 L1128.1,352.0 L1128.2,351.3 L1128.7,347.0 L1129.2,342.5 L1129.3,343.8 L1129.7,340.1 L1130.0,338.2 L1130.2,347.0 L1130.7,350.1 L1131.2,355.3 L1131.7,354.5 L1131.9,354.9 L1132.2,350.5 L1132.7,346.9 L1132.9,342.2 L1133.2,344.1 L1133.4,340.2 L1133.7,343.9 L1134.2,350.4 L1134.6,355.5 L1134.7,355.9 L1135.2,358.8 L1135.7,361.2 L1136.2,363.1 L1136.7,364.4 L1137.2,366.0 L1137.7,367.7 L1138.2,369.5 L1138.6,370.8 L1138.7,371.9 L1139.2,377.8 L1139.7,383.6 L1139.9,386.0 L1140.2,388.7 L1140.7,393.1 L1141.2,397.5 L1141.4,399.3 L1141.7,400.6 L1142.2,402.9 L1142.7,405.1 L1142.9,406.0 L1143.2,406.8 L1143.7,408.1 L1144.2,409.6 L1144.3,409.8 L1144.7,409.4 L1145.2,408.7 L1145.7,408.2 L1146.2,407.8 L1146.7,407.6 L1147.2,408.1 L1147.7,407.9 L1148.1,407.9 L1148.2,408.2 L1148.7,409.7 L1149.2,411.2 L1149.7,412.7 L1150.0,413.6 L1150.2,414.3 L1150.7,416.0 L1151.2,417.8 L1151.7,419.5 L1151.9,420.2 L1152.2,420.4 L1152.7,420.7 L1153.2,421.2 L1153.4,421.2 L1153.7,420.2 L1154.2,419.1 L1154.7,417.4 L1155.2,418.8 L1155.7,419.8 L1155.9,419.0 L1156.2,420.9 L1156.7,422.7 L1157.0,424.7 L1157.2,422.6 L1157.7,422.2 L1158.2,419.6 L1158.5,417.6 L1158.7,418.5 L1159.2,411.6 L1159.7,411.3 L1160.2,404.9 L1160.4,403.7 L1160.7,401.3 L1161.2,399.8 L1161.7,396.7 L1162.2,388.4 L1162.3,389.8 L1162.7,386.2 L1163.2,383.0 L1163.7,375.6 L1164.2,372.7 L1164.7,373.0 L1165.2,377.0 L1165.4,374.8 L1165.7,374.8 L1166.2,363.2 L1166.5,361.0 L1166.7,363.5 L1167.2,359.5 L1167.7,353.6 L1168.0,355.7 L1168.2,350.6 L1168.7,355.2 L1169.2,349.8 L1169.7,351.2 L1169.9,347.4 L1170.2,346.9 L1170.7,349.0 L1171.2,350.5 L1171.4,352.8 L1171.7,348.5 L1172.2,355.2 L1172.7,348.8 L1172.8,350.5 L1173.2,349.0 L1173.7,350.2 L1174.2,348.9 L1174.7,347.6 L1175.2,355.1 L1175.7,353.3 L1176.0,355.7 L1176.2,357.1 L1176.7,360.4 L1177.2,363.5 L1177.5,365.2 L1177.7,366.4 L1178.2,369.9 L1178.7,373.4 L1179.2,377.1 L1179.4,378.4 L1179.7,380.2 L1180.2,383.2 L1180.7,386.2 L1181.2,389.2 L1181.3,389.8 L1181.7,391.0 L1182.2,392.5 L1182.7,394.0 L1183.2,395.4 L1183.7,396.9 L1184.2,398.4 L1184.7,399.6 L1185.2,400.8 L1185.7,401.9 L1186.2,403.1 L1186.7,404.3 L1187.0,405.0 L1187.2,405.5 L1187.7,406.8 L1188.2,408.1 L1188.7,409.4 L1189.2,410.8 L1189.7,412.1 L1189.9,412.6 L1190.2,413.4 L1190.7,414.5 L1191.2,415.7 L1191.7,417.0 L1192.2,418.1 L1192.7,419.3 L1193.2,419.3 L1193.7,419.1 L1194.2,419.3 L1194.3,419.3 L1194.7,419.0 L1195.2,418.6 L1195.6,418.1 L1195.7,418.5 L1196.2,419.7 L1196.5,420.3 L1196.7,421.2 L1197.2,424.1 L1197.5,424.9 L1197.7,422.7 L1198.2,422.9 L1198.7,420.1 L1198.8,420.8 L1199.2,419.6 L1199.7,414.4 L1200.2,412.0 L1200.7,409.7 L1201.2,405.3 L1201.3,404.3 L1201.7,402.4 L1202.2,398.6 L1202.7,393.6 L1203.2,388.4 L1203.7,385.0 L1204.2,379.7 L1204.7,375.1 L1205.1,370.6 L1205.2,368.6 L1205.7,365.7 L1206.2,358.4 L1206.6,356.2 L1206.7,359.2 L1207.2,357.0 L1207.7,354.7 L1207.9,350.7 L1208.2,350.8 L1208.7,348.8 L1209.2,348.3 L1209.5,344.1 L1209.7,347.0 L1210.2,346.6 L1210.7,338.9 L1210.8,341.9 L1211.2,348.7 L1211.7,348.6 L1212.2,351.7 L1212.7,353.2 L1213.2,345.7 L1213.6,344.6 L1213.7,342.1 L1214.2,346.3 L1214.6,344.6 L1214.7,344.8 L1215.2,349.1 L1215.5,354.8 L1215.7,355.1 L1216.2,355.7 L1216.5,355.7 L1216.7,356.6 L1217.2,358.6 L1217.7,360.2 L1217.8,360.4 L1218.2,362.5 L1218.7,364.2 L1219.2,366.7 L1219.3,367.0 L1219.7,369.9 L1220.2,373.2 L1220.7,376.9 L1221.2,380.3 L1221.7,382.8 L1222.2,385.3 L1222.7,387.8 L1223.1,389.8 L1223.2,390.1 L1223.7,391.4 L1224.2,392.7 L1224.7,394.0 L1225.2,395.3 L1225.7,396.6 L1226.0,397.4 L1226.2,397.9 L1226.7,399.1 L1227.2,400.2 L1227.7,401.5 L1228.2,402.7 L1228.7,403.8 L1228.8,404.1 L1229.2,405.0 L1229.7,406.2 L1230.2,407.3 L1230.7,408.4 L1231.2,409.6 L1231.7,410.7 L1232.2,411.8 L1232.7,412.7 L1233.2,413.8 L1233.7,414.8 L1234.2,415.8 L1234.5,416.4 L1234.7,416.8 L1235.2,417.9 L1235.7,418.9 L1236.2,420.0 L1236.7,420.9 L1236.8,421.3 L1237.2,421.8 L1237.7,422.3 L1238.2,422.7 L1238.3,423.8 L1238.7,419.6 L1239.2,415.0 L1239.3,417.0 L1239.7,414.2 L1240.2,412.9 L1240.7,414.3 L1241.2,416.7 L1241.4,417.2 L1241.7,418.2 L1242.2,418.8 L1242.5,417.9 L1242.7,417.9 L1243.2,411.9 L1243.7,402.7 L1244.0,402.1 L1244.2,400.6 L1244.7,394.0 L1245.2,385.2 L1245.7,382.3 L1245.9,378.8 L1246.2,374.6 L1246.7,371.9 L1247.2,375.0 L1247.5,371.4 L1247.7,368.2 L1248.2,364.7 L1248.7,362.6 L1248.8,363.8 L1249.2,366.7 L1249.7,362.4 L1250.2,359.9 L1250.7,363.1 L1251.2,360.2 L1251.3,355.0 L1251.7,357.2 L1252.2,349.9 L1252.6,345.5 L1252.7,347.4 L1253.2,354.4 L1253.5,353.8 L1253.7,356.7 L1254.2,352.3 L1254.5,353.9 L1254.7,354.1 L1255.2,352.9 L1255.6,347.8 L1255.7,351.6 L1256.2,346.5 L1256.7,351.9 L1257.1,357.5 L1257.2,357.8 L1257.7,359.9 L1258.1,361.2 L1258.2,360.8 L1258.7,357.2 L1258.8,356.7 L1259.2,356.1 L1259.4,355.7 L1259.7,359.1 L1260.2,363.5 L1260.7,369.0 L1260.9,370.8 L1261.2,373.7 L1261.7,378.5 L1262.2,383.2 L1262.4,385.1 L1262.7,385.9 L1263.2,387.2 L1263.7,388.4 L1264.2,389.7 L1264.7,391.0 L1265.2,392.3 L1265.7,393.6 L1266.2,395.3 L1266.7,397.0 L1267.2,398.7 L1267.7,400.4 L1268.2,402.1 L1268.5,403.1 L1268.7,403.7 L1269.2,404.9 L1269.7,406.3 L1270.2,407.6 L1270.7,408.9 L1271.2,410.2 L1271.4,410.7 L1271.7,411.3 L1272.2,412.3 L1272.7,413.4 L1273.2,414.3 L1273.7,415.4 L1274.2,416.4 L1274.7,417.9 L1275.2,419.4 L1275.7,420.9 L1276.1,422.1 L1276.2,422.4 L1276.7,423.9 L1277.2,425.4 L1277.7,426.9 L1278.0,427.8 L1278.2,428.1 L1278.7,428.9 L1279.1,428.9 L1279.2,428.6 L1279.7,429.9 L1280.2,431.0 L1280.3,431.1 L1280.7,426.2 L1280.9,420.9 L1281.2,421.9 L1281.4,421.2 L1281.7,421.5 L1282.2,421.3 L1282.4,423.5 L1282.7,421.8 L1283.2,422.6 L1283.3,425.1 L1283.7,420.7 L1284.2,416.1 L1284.7,411.5 L1285.2,408.0 L1285.7,402.2 L1286.2,397.7 L1286.6,393.9 L1286.7,393.6 L1287.2,389.0 L1287.5,386.5 L1287.7,383.5 L1288.2,382.4 L1288.7,378.2 L1289.0,377.5 L1289.2,372.7 L1289.7,370.3 L1290.2,366.0 L1290.4,370.4 L1290.7,371.0 L1291.2,365.9 L1291.7,359.8 L1292.2,362.2 L1292.7,360.0 L1293.2,354.5 L1293.7,350.6 L1294.2,349.1 L1294.7,349.4 L1295.1,347.3 L1295.2,349.3 L1295.7,354.0 L1296.1,356.6 L1296.2,352.4 L1296.7,358.2 L1297.0,356.5 L1297.2,353.1 L1297.6,350.6 L1297.7,350.2 L1298.0,350.2 L1298.2,352.5 L1298.7,360.4 L1299.2,364.5 L1299.3,365.2 L1299.7,359.8 L1300.0,357.7 L1300.2,355.6 L1300.7,354.0 L1300.8,351.9 L1301.2,359.9 L1301.7,363.5 L1302.2,369.4 L1302.3,370.6 L1302.7,375.0 L1303.2,380.6 L1303.7,386.0 L1304.2,387.4 L1304.7,388.7 L1305.2,390.1 L1305.7,391.4 L1306.2,392.7 L1306.5,393.6 L1306.7,394.0 L1307.2,395.0 L1307.7,395.9 L1308.2,396.9 L1308.7,397.9 L1309.2,398.9 L1309.4,399.3 L1309.7,400.1 L1310.2,401.4 L1310.7,402.8 L1311.2,404.2 L1311.7,405.5 L1312.2,406.9 L1312.7,408.0 L1313.2,409.3 L1313.7,410.4 L1314.2,411.5 L1314.7,412.6 L1315.1,413.6 L1315.2,413.8 L1315.7,414.7 L1316.2,415.6 L1316.7,416.5 L1317.2,417.4 L1317.7,418.4 L1317.9,418.7 L1318.2,419.0 L1318.7,419.6 L1319.2,420.3 L1319.7,420.8 L1320.2,421.5 L1320.7,421.8 L1320.8,422.2 L1321.2,418.8 L1321.5,416.8 L1321.7,416.7 L1322.1,415.3 L1322.2,415.5 L1322.7,419.6 L1322.9,420.5 L1323.2,420.1 L1323.6,418.5 L1323.7,416.8 L1324.2,412.8 L1324.7,413.8 L1325.2,409.6 L1325.5,407.8 L1325.7,404.6 L1326.2,401.8 L1326.7,399.4 L1327.2,394.8 L1327.4,392.0 L1327.7,387.4 L1328.2,382.3 L1328.7,378.6 L1328.9,374.3 L1329.2,372.7 L1329.7,367.7 L1330.2,365.5 L1330.3,362.8 L1330.7,357.3 L1331.2,354.7 L1331.6,354.6 L1331.7,354.7 L1332.2,351.0 L1332.4,349.2 L1332.7,352.0 L1333.1,344.7 L1333.2,351.0 L1333.7,348.8 L1334.2,347.2 L1334.3,342.3 L1334.7,339.3 L1335.2,342.8 L1335.4,341.0 L1335.7,344.8 L1336.2,349.8 L1336.5,348.2 L1336.7,347.2 L1337.2,349.9 L1337.3,350.2 L1337.7,344.9 L1337.9,345.5 L1338.2,347.9 L1338.4,342.0 L1338.7,347.5 L1339.2,350.3 L1339.4,351.9 L1339.7,352.7 L1340.2,354.4 L1340.3,354.9 L1340.7,356.0 L1341.2,356.9 L1341.5,357.4 L1341.7,358.8 L1342.2,361.3 L1342.6,363.1 L1342.7,364.0 L1343.2,368.1 L1343.7,372.1 L1344.2,376.0 L1344.5,378.4 L1344.7,379.8 L1345.2,383.3 L1345.7,386.8 L1346.2,390.3 L1346.4,391.7 L1346.7,392.3 L1347.2,393.3 L1347.7,394.2 L1348.2,395.2 L1348.7,396.2 L1349.2,397.2 L1349.3,397.4 L1349.7,397.9 L1350.2,398.6 L1350.7,399.3 L1351.2,400.0 L1351.7,400.6 L1352.1,401.2 L1352.2,401.7 L1352.7,404.1 L1352.9,405.0 L1353.2,404.1 L1353.6,403.1 L1353.7,403.3 L1354.2,404.2 L1354.7,405.1 L1355.2,405.9 L1355.7,406.9 L1356.2,407.7 L1356.3,407.9 L1356.7,408.4 L1357.2,408.9 L1357.7,409.5 L1358.2,410.0 L1358.7,410.5 L1358.8,410.7 L1359.2,411.1 L1359.7,411.4 L1360.2,411.8 L1360.7,412.6 L1361.2,413.2 L1361.7,413.3 L1362.0,413.8 L1362.2,412.2 L1362.6,408.6 L1362.7,408.9 L1363.1,406.6 L1363.2,405.9 L1363.7,413.2 L1363.9,412.0 L1364.2,413.4 L1364.5,414.0 L1364.7,414.3 L1365.2,409.7 L1365.7,405.2 L1365.8,404.9 L1366.2,401.0 L1366.7,401.3 L1367.2,398.3 L1367.3,394.8 L1367.7,391.1 L1368.2,389.0 L1368.7,386.4 L1369.2,385.2 L1369.7,383.3 L1370.2,380.5 L1370.7,375.3 L1371.2,379.6 L1371.5,380.0 L1371.7,379.7 L1372.1,379.7 L1372.2,375.3 L1372.7,369.7 L1373.2,367.2 L1373.4,365.1 L1373.7,362.2 L1374.2,356.7 L1374.7,355.0 L1374.9,353.3 L1375.2,346.4 L1375.7,343.7 L1375.9,341.2 L1376.2,339.9 L1376.7,344.3 L1376.8,341.5 L1377.2,340.8 L1377.7,338.6 L1377.8,341.4 L1378.2,340.4 L1378.7,349.8 L1379.1,349.8 L1379.2,350.1 L1379.7,352.7 L1380.2,354.0 L1380.6,355.9 L1380.7,355.3 L1381.2,351.6 L1381.6,347.4 L1381.7,348.9 L1382.2,345.4 L1382.5,348.9 L1382.7,351.9 L1383.2,353.4 L1383.7,358.2 L1384.2,363.0 L1384.4,365.2 L1384.7,367.5 L1385.2,371.5 L1385.7,375.5 L1386.2,379.5 L1386.3,380.3 L1386.7,381.3 L1387.2,382.6 L1387.7,383.8 L1388.2,385.1 L1388.7,385.8 L1389.2,386.6 L1389.7,387.3 L1390.1,387.9 L1390.2,388.2 L1390.7,389.3 L1391.2,390.4 L1391.7,391.6 L1392.2,392.7 L1392.7,393.9 L1393.0,394.6 L1393.2,395.1 L1393.7,396.2 L1394.2,397.5 L1394.7,398.6 L1395.2,399.8 L1395.7,401.0 L1395.8,401.2 L1396.2,402.0 L1396.7,402.9 L1397.2,403.9 L1397.7,405.0 L1398.2,406.0 L1398.7,406.9 L1399.2,407.5 L1399.7,408.2 L1400.2,409.0 L1400.7,409.6 L1401.2,410.3 L1401.5,410.7 L1401.7,411.0 L1402.2,411.7 L1402.7,412.5 L1403.2,413.2 L1403.7,413.9 L1403.8,413.9 L1404.2,414.8 L1404.7,415.2 L1405.2,414.4 L1405.7,416.2 L1406.2,416.5 L1406.7,411.7 L1406.8,412.8 L1407.2,407.8 L1407.7,403.9 L1408.2,401.9 L1408.7,394.8 L1409.2,385.3 L1409.5,381.1 L1409.7,377.6 L1410.2,373.0 L1410.7,365.4 L1411.0,360.1 L1411.2,357.8 L1411.7,360.9 L1412.2,359.9 L1412.5,358.1 L1412.7,356.3 L1413.2,348.6 L1413.7,342.7 L1413.9,346.2 L1414.2,347.0 L1414.7,352.7 L1415.2,353.6 L1415.7,357.3 L1416.2,355.2 L1416.7,358.2 L1417.2,362.2 L1417.7,361.2 L1418.2,348.9 L1418.6,348.3 L1418.7,346.1 L1419.2,349.5 L1419.6,342.2 L1419.7,341.2 L1420.2,348.1 L1420.7,342.6 L1420.9,341.3 L1421.2,342.9 L1421.7,345.2 L1422.2,340.8 L1422.4,344.5 L1422.7,348.4 L1423.2,353.8 L1423.7,354.9 L1423.9,355.8 L1424.2,353.6 L1424.7,351.5 L1425.2,348.4 L1425.3,349.9 L1425.7,352.1 L1426.2,357.3 L1426.7,361.7 L1427.2,367.1 L1427.7,372.2 L1428.2,377.2 L1428.5,380.3 L1428.7,380.8 L1429.2,381.9 L1429.7,383.0 L1430.2,384.2 L1430.7,385.3 L1431.0,386.0 L1431.2,386.4 L1431.7,387.4 L1432.2,388.5 L1432.7,389.4 L1433.2,390.4 L1433.7,391.5 L1433.8,391.7 L1434.2,392.7 L1434.7,394.1 L1435.2,395.4 L1435.7,396.7 L1436.2,398.0 L1436.7,399.3 L1437.2,400.5 L1437.7,401.7 L1438.2,402.8 L1438.7,404.1 L1439.2,405.3 L1439.5,406.0 L1439.7,406.4 L1440.2,407.4 L1440.7,408.4 L1441.2,409.4 L1441.7,410.5 L1441.8,410.7 L1442.2,411.1 L1442.7,411.8 L1443.2,412.3 L1443.7,412.9 L1444.2,413.5 L1444.3,413.8 L1444.7,413.8 L1445.2,414.2 L1445.6,414.6 L1445.7,414.5 L1446.2,414.0 L1446.7,415.7 L1447.2,414.4 L1447.7,411.1 L1448.1,410.0 L1448.2,409.6 L1448.7,407.9 L1449.0,408.2 L1449.2,406.0 L1449.7,400.7 L1450.2,394.6 L1450.5,390.7 L1450.7,385.1 L1451.2,380.4 L1451.7,375.5 L1451.9,371.9 L1452.2,367.8 L1452.7,365.4 L1452.8,365.5 L1453.2,360.6 L1453.7,356.7 L1453.8,353.9 L1454.2,351.7 L1454.7,348.0 L1455.2,344.3 L1455.7,343.6 L1456.2,328.2 L1456.7,342.1 L1457.0,349.4 L1457.2,351.0 L1457.6,355.0 L1457.7,355.1 L1458.1,348.5 L1458.2,343.7 L1458.7,356.9 L1458.9,360.2 L1459.2,354.9 L1459.7,344.1 L1460.2,338.9 L1460.7,336.0 L1460.8,329.7 L1461.2,331.5 L1461.7,339.5 L1461.8,339.3 L1462.2,340.7 L1462.7,329.0 L1463.2,332.3 L1463.7,337.8 L1464.2,338.4 L1464.7,339.8 L1465.2,341.0 L1465.7,341.7 L1466.1,342.3 L1466.2,343.3 L1466.7,347.7 L1467.2,352.0 L1467.7,356.6 L1468.0,359.3 L1468.2,360.8 L1468.7,364.6 L1469.2,368.3 L1469.7,372.0 L1470.2,375.7 L1470.3,376.5 L1470.7,377.2 L1471.2,378.1 L1471.4,378.4 L1471.7,378.6 L1472.2,378.9 L1472.7,379.3 L1472.8,379.4 L1473.2,380.8 L1473.7,382.6 L1474.2,384.4 L1474.7,386.1 L1475.2,387.9 L1475.7,389.5 L1476.2,391.2 L1476.7,392.8 L1477.2,394.5 L1477.5,395.5 L1477.7,395.9 L1478.2,396.9 L1478.7,397.8 L1479.2,398.8 L1479.7,399.8 L1480.2,400.8 L1480.4,401.2 L1480.7,401.7 L1481.2,402.6 L1481.7,403.4 L1482.2,404.2 L1482.7,405.2 L1483.2,406.0 L1483.7,406.8 L1484.2,407.7 L1484.7,408.4 L1484.8,409.4 L1485.2,408.9 L1485.7,409.3 L1486.1,410.0 L1486.2,408.8 L1486.7,402.2 L1487.0,398.0 L1487.2,399.4 L1487.7,404.9 L1487.8,405.3 L1488.2,408.4 L1488.6,409.6 L1488.7,407.7 L1489.2,402.8 L1489.7,397.0 L1489.9,394.3 L1490.2,390.8 L1490.7,387.7 L1491.2,382.8 L1491.7,379.2 L1491.8,375.5 L1492.2,374.0 L1492.7,365.1 L1493.1,364.0 L1493.2,363.0 L1493.7,359.4 L1494.2,359.4 L1494.6,354.0 L1494.7,352.6 L1495.2,353.3 L1495.7,352.4 L1495.8,349.3 L1496.2,346.5 L1496.5,345.0 L1496.7,342.6 L1497.2,338.3 L1497.5,329.0 L1497.7,333.9 L1498.2,344.5 L1498.4,346.5 L1498.7,348.6 L1499.2,353.4 L1499.4,354.5 L1499.7,348.8 L1500.2,340.3 L1500.3,338.1 L1500.7,337.1 L1501.2,333.6 L1501.3,336.5 L1501.7,342.1 L1502.2,344.3 L1502.7,348.8 L1503.2,342.4 L1503.7,341.5 L1504.1,336.5 L1504.2,339.3 L1504.7,333.7 L1505.1,335.4 L1505.2,340.3 L1505.7,339.7 L1506.2,344.2 L1506.4,346.2 L1506.7,347.8 L1507.2,350.5 L1507.7,352.9 L1507.9,353.7 L1508.2,355.5 L1508.7,357.7 L1509.2,360.2 L1509.7,362.7 L1509.8,363.2 L1510.2,364.8 L1510.7,366.8 L1511.2,368.8 L1511.7,370.8 L1512.2,372.5 L1512.7,374.1 L1513.2,375.7 L1513.7,377.3 L1514.2,379.0 L1514.6,380.3 L1514.7,380.6 L1515.2,382.4 L1515.7,384.1 L1516.2,385.7 L1516.7,387.4 L1517.2,389.1 L1517.4,389.8 L1517.7,390.5 L1518.2,391.7 L1518.7,392.8 L1519.2,393.9 L1519.7,395.1 L1520.2,396.3 L1520.3,396.5 L1520.7,397.4 L1521.2,398.6 L1521.7,399.8 L1522.2,401.0 L1522.7,402.2 L1523.1,403.1 L1523.2,403.3 L1523.7,404.0 L1524.2,404.7 L1524.7,405.5 L1525.0,406.0 L1525.2,406.3 L1525.7,407.0 L1526.2,407.8 L1526.7,408.9 L1527.2,409.7 L1527.3,409.7 L1527.7,409.6 L1528.1,405.4 L1528.2,402.7 L1528.7,403.0 L1528.8,403.9 L1529.2,402.6 L1529.7,404.8 L1529.8,402.8 L1530.2,402.4 L1530.7,403.1 L1531.2,399.3 L1531.7,396.4 L1532.2,391.0 L1532.3,391.7 L1532.7,390.2 L1533.2,386.7 L1533.6,386.4 L1533.7,385.1 L1534.2,382.0 L1534.7,375.1 L1534.9,372.5 L1535.2,368.8 L1535.7,365.1 L1536.2,364.2 L1536.4,359.9 L1536.7,358.2 L1537.2,357.3 L1537.7,358.4 L1538.0,358.9 L1538.2,356.9 L1538.7,355.1 L1539.2,347.1 L1539.3,346.8 L1539.7,349.4 L1540.2,342.5 L1540.7,349.1 L1541.2,349.3 L1541.7,347.6 L1542.1,347.9 L1542.2,346.5 L1542.7,348.1 L1543.1,343.9 L1543.2,342.8 L1543.7,343.3 L1544.0,342.0 L1544.2,340.5 L1544.7,348.2 L1545.0,346.4 L1545.2,347.1 L1545.7,336.1 L1545.9,333.6 L1546.2,337.8 L1546.5,343.2 L1546.7,346.7 L1546.9,348.3 L1547.2,349.8 L1547.7,353.3 L1548.2,356.2 L1548.7,358.8 L1548.8,359.4 L1549.2,361.4 L1549.7,363.1 L1550.2,365.4 L1550.7,367.0 L1551.2,369.1 L1551.6,370.8 L1551.7,371.0 L1552.2,372.5 L1552.7,374.1 L1553.2,375.5 L1553.7,377.0 L1553.9,377.5 L1554.2,377.9 L1554.7,378.6 L1555.2,379.2 L1555.7,380.0 L1556.2,380.6 L1556.7,381.3 L1557.2,381.9 L1557.7,382.6 L1558.0,383.0 L1558.2,383.3 L1558.7,384.0 L1559.2,384.8 L1559.7,385.6 L1560.2,386.3 L1560.7,387.4 L1561.2,388.5 L1561.7,389.7 L1562.0,390.4 L1562.2,390.8 L1562.7,392.1 L1563.1,393.1 L1563.2,395.6 L1563.7,408.5 L1563.8,411.0 L1564.2,426.7 L1564.7,433.2 L1564.9,435.7 L1565.2,438.4 L1565.4,440.2 L1565.7,439.3 L1566.2,437.8 L1566.7,436.3 L1566.9,435.8 L1567.2,435.0 L1567.7,436.2 L1568.2,431.9 L1568.7,434.2 L1569.2,431.2 L1569.7,429.5 L1570.2,430.0 L1570.7,428.1 L1571.2,430.1 L1571.4,428.4 L1571.7,430.6 L1572.2,429.0 L1572.7,427.7 L1573.2,426.9 L1573.7,428.1 L1574.2,425.9 L1574.7,428.2 L1575.2,424.3 L1575.5,425.6 L1575.7,425.3 L1576.2,423.0 L1576.7,424.1 L1577.0,421.9 L1577.2,421.5 L1577.7,417.6 L1578.2,413.0 L1578.6,410.7 L1578.7,408.4 L1579.2,405.1 L1579.7,404.3 L1580.2,398.2 L1580.4,397.9 L1580.7,393.9 L1581.2,393.0 L1581.5,390.3 L1581.7,390.0 L1582.2,386.6 L1582.6,384.4 L1582.7,383.1 L1583.2,375.4 L1583.5,369.7 L1583.7,372.0 L1584.2,360.5 L1584.7,367.3 L1585.1,373.0 L1585.2,371.7 L1585.7,374.8 L1586.0,376.5 L1586.2,373.2 L1586.7,366.1 L1587.1,363.8 L1587.2,372.6 L1587.7,394.8 L1587.8,399.8 L1588.2,415.2 L1588.5,426.7 L1588.7,424.7 L1589.2,419.7 L1589.4,417.7 L1589.7,416.5 L1590.2,414.5 L1590.5,413.3 L1590.7,414.1 L1591.2,416.3 L1591.6,417.8 L1591.7,418.1 L1592.2,419.5 L1592.7,421.1 L1593.2,421.6 L1593.7,422.2 L1594.2,422.8 L1594.7,423.4 L1595.2,423.9 L1595.7,424.5 L1596.2,424.9 L1596.7,425.3 L1597.2,425.8 L1597.7,426.1 L1598.2,426.7 L1598.4,426.6 L1598.7,426.9 L1599.2,427.4 L1599.7,427.5 L1600.2,427.7 L1600.7,428.5 L1601.2,428.8 L1601.7,428.9 L1602.2,429.0 L1602.7,429.9 L1603.2,430.0 L1603.7,430.0 L1604.2,430.5 L1604.7,430.7 L1605.1,431.3 L1605.2,431.0 L1605.7,431.1 L1606.2,430.8 L1606.7,430.2 L1607.2,430.3 L1607.3,430.1 L1607.7,430.6 L1608.2,432.3 L1608.7,430.3 L1609.2,429.8 L1609.7,434.0 L1610.0,432.1 L1610.2,432.9 L1610.7,428.8 L1610.9,427.3 L1611.2,427.4 L1611.7,425.3 L1611.8,424.4 L1612.2,421.5 L1612.7,422.7 L1613.2,420.7 L1613.6,420.0 L1613.7,420.8 L1614.2,411.6 L1614.7,408.8 L1615.0,403.1 L1615.2,402.8 L1615.7,397.2 L1616.2,388.8 L1616.3,388.7 L1616.7,386.7 L1617.2,380.2 L1617.4,377.5 L1617.7,373.8 L1618.2,369.3 L1618.6,369.8 L1618.7,368.5 L1619.2,362.5 L1619.5,359.5 L1619.7,354.9 L1620.1,353.2 L1620.2,356.3 L1620.7,360.5 L1621.0,365.9 L1621.2,369.7 L1621.7,372.7 L1621.9,377.0 L1622.2,371.1 L1622.7,367.7 L1623.1,366.7 L1623.2,361.5 L1623.7,359.1 L1624.0,352.9 L1624.2,357.3 L1624.7,351.6 L1624.8,351.3 L1625.2,351.1 L1625.7,360.5 L1626.2,362.7 L1626.7,365.1 L1627.2,367.1 L1627.5,368.6 L1627.7,365.8 L1628.2,359.6 L1628.4,357.4 L1628.7,355.0 L1629.2,351.3 L1629.3,352.6 L1629.7,356.5 L1630.2,363.1 L1630.7,368.5 L1631.2,371.6 L1631.7,375.2 L1632.0,377.3 L1632.2,378.5 L1632.7,381.6 L1633.2,384.8 L1633.7,387.9 L1633.8,388.6 L1634.2,390.8 L1634.7,393.6 L1635.2,396.4 L1635.4,397.5 L1635.7,398.3 L1636.2,399.5 L1636.7,400.9 L1637.2,402.2 L1637.6,403.2 L1637.7,403.3 L1638.2,404.0 L1638.7,404.8 L1639.2,405.5 L1639.7,406.2 L1639.9,406.5 L1640.2,407.6 L1640.7,409.3 L1641.2,411.0 L1641.7,412.7 L1642.2,414.5 L1642.7,416.3 L1642.8,416.6 L1643.2,417.8 L1643.7,419.2 L1644.2,420.7 L1644.7,422.2 L1645.2,423.7 L1645.5,424.5 L1645.7,424.8 L1646.2,425.6 L1646.7,426.3 L1647.2,427.0 L1647.7,427.8 L1648.2,428.3 L1648.7,428.2 L1649.2,428.0 L1649.7,429.1 L1650.0,428.7 L1650.2,429.4 L1650.7,424.3 L1651.1,422.2 L1651.2,423.4 L1651.7,422.1 L1652.2,420.8 L1652.7,420.1 L1653.2,420.1 L1653.6,418.9 L1653.7,417.5 L1654.2,416.7 L1654.7,414.3 L1654.9,415.0 L1655.2,413.0 L1655.7,405.9 L1656.2,403.8 L1656.3,401.1 L1656.7,398.2 L1657.2,396.0 L1657.7,387.7 L1657.8,387.4 L1658.2,385.5 L1658.7,380.8 L1659.2,380.0 L1659.4,375.5 L1659.7,378.0 L1660.2,375.9 L1660.7,373.2 L1661.2,368.0 L1661.7,364.3 L1662.2,363.4 L1662.3,360.6 L1662.7,358.4 L1663.2,354.8 L1663.5,353.6 L1663.7,358.2 L1664.2,363.6 L1664.4,363.7 L1664.7,361.4 L1665.2,365.6 L1665.3,366.8 L1665.7,360.8 L1666.1,355.2 L1666.2,353.6 L1666.7,349.3 L1667.2,348.0 L1667.3,347.9 L1667.7,357.7 L1668.2,360.8 L1668.7,361.9 L1669.1,364.2 L1669.2,365.2 L1669.7,368.4 L1670.2,371.9 L1670.7,373.9 L1671.2,376.9 L1671.3,377.3 L1671.7,380.6 L1672.2,384.9 L1672.7,389.2 L1672.9,390.8 L1673.2,392.7 L1673.7,395.8 L1674.2,398.9 L1674.7,402.0 L1675.2,404.1 L1675.7,406.2 L1676.2,408.3 L1676.7,410.4 L1677.2,412.4 L1677.4,413.3 L1677.7,414.2 L1678.2,415.8 L1678.7,417.3 L1679.2,418.8 L1679.7,420.4 L1680.2,421.9 L1680.3,422.2 L1680.7,423.4 L1681.2,425.0 L1681.7,426.5 L1682.2,428.1 L1682.7,429.7 L1683.2,431.2 L1683.7,432.4 L1684.2,433.7 L1684.7,434.9 L1685.2,436.2 L1685.7,437.4 L1685.9,437.9 L1686.2,438.7 L1686.7,439.9 L1687.2,441.2 L1687.7,442.4 L1688.2,443.7 L1688.6,444.7 L1688.7,444.9 L1689.2,445.9 L1689.7,446.9 L1690.2,447.8 L1690.7,448.8 L1691.2,449.7 L1691.5,450.3 L1691.7,450.6 L1692.2,451.2 L1692.7,451.7 L1693.2,452.6 L1693.3,452.5 L1693.7,451.2 L1694.2,454.9 L1694.7,453.4 L1694.9,453.9 L1695.2,450.6 L1695.7,451.8 L1695.8,449.1 L1696.2,445.9 L1696.5,444.4 L1696.7,438.6 L1697.2,431.1 L1697.4,425.9 L1697.7,419.9 L1698.2,411.5 L1698.7,408.2 L1699.2,408.3 L1699.7,404.5 L1699.8,404.7 L1700.2,402.4 L1700.7,403.5 L1701.2,401.7 L1701.6,395.8 L1701.7,399.4 L1702.2,394.6 L1702.7,398.0 L1703.2,396.3 L1703.4,395.4 L1703.7,391.1 L1704.2,391.5 L1704.7,393.1 L1705.0,391.9 L1705.2,391.0 L1705.7,381.2 L1706.1,382.7 L1706.2,378.3 L1706.7,381.1 L1707.2,379.6 L1707.7,377.4 L1708.2,388.9 L1708.3,385.3 L1708.7,383.8 L1709.2,384.9 L1709.5,386.9 L1709.7,388.4 L1710.2,382.7 L1710.4,377.6 L1710.7,375.2 L1711.0,375.3 L1711.2,381.6 L1711.7,379.3 L1712.2,385.0 L1712.4,384.1 L1712.7,387.7 L1713.2,387.0 L1713.7,387.6 L1714.0,388.9 L1714.2,390.9 L1714.7,396.2 L1715.2,401.3 L1715.5,404.4 L1715.7,405.6 L1716.2,409.5 L1716.7,413.2 L1717.2,417.0 L1717.3,417.7 L1717.7,421.7 L1718.2,426.7 L1718.7,429.2 L1719.1,431.2 L1719.2,431.5 L1719.7,433.1 L1720.2,434.6 L1720.7,436.1 L1720.9,436.8 L1721.2,437.6 L1721.7,439.1 L1722.2,440.4 L1722.7,441.8 L1722.9,442.4 L1723.2,442.7 L1723.7,443.2 L1724.2,443.7 L1724.7,444.2 L1725.2,444.7 L1725.7,445.4 L1726.2,446.2 L1726.7,447.0 L1727.2,447.7 L1727.4,448.0 L1727.7,448.7 L1728.2,450.0 L1728.7,451.2 L1729.2,452.4 L1729.7,453.7 L1730.2,454.5 L1730.7,455.2 L1731.2,455.9 L1731.7,456.7 L1731.9,456.9 L1732.2,456.7 L1732.7,456.5 L1733.2,455.1 L1733.5,456.1 L1733.7,456.2 L1734.2,458.5 L1734.7,459.1 L1734.8,455.8 L1735.2,455.4 L1735.7,453.9 L1736.2,451.3 L1736.7,447.6 L1737.2,443.1 L1737.5,440.6 L1737.7,434.1 L1738.2,420.0 L1738.4,416.3 L1738.7,408.2 L1739.2,395.4 L1739.3,390.2 L1739.7,381.0 L1740.0,378.0 L1740.2,376.7 L1740.4,369.9 L1740.7,377.3 L1741.2,382.9 L1741.3,385.3 L1741.7,388.8 L1742.0,388.5 L1742.2,388.7 L1742.7,382.3 L1742.9,382.2 L1743.2,379.9 L1743.7,376.4 L1743.8,374.8 L1744.2,373.6 L1744.7,373.5 L1745.2,370.0 L1745.6,368.8 L1745.7,376.8 L1746.2,371.4 L1746.7,370.5 L1747.2,371.0 L1747.6,367.3 L1747.7,366.4 L1748.2,366.2 L1748.7,368.8 L1749.2,369.5 L1749.7,373.6 L1749.9,371.5 L1750.2,375.8 L1750.7,371.2 L1751.2,376.3 L1751.7,373.9 L1752.1,370.7 L1752.2,370.9 L1752.7,374.6 L1753.2,378.2 L1753.7,373.5 L1754.1,375.6 L1754.2,374.5 L1754.7,378.4 L1755.2,372.8 L1755.7,376.4 L1755.9,377.8 L1756.2,378.0 L1756.7,383.1 L1757.2,387.7 L1757.7,393.0 L1758.2,396.7 L1758.7,400.6 L1759.2,404.2 L1759.5,406.5 L1759.7,406.8 L1760.2,407.8 L1760.7,408.8 L1761.2,409.7 L1761.7,410.5 L1762.2,411.5 L1762.7,412.4 L1763.2,413.2 L1763.7,414.1 L1764.2,415.0 L1764.5,415.5 L1764.7,416.0 L1765.2,417.4 L1765.7,418.7 L1766.2,420.1 L1766.7,421.5 L1767.2,422.9 L1767.7,424.3 L1767.8,424.5 L1768.2,425.4 L1768.7,426.6 L1769.2,427.7 L1769.7,428.9 L1770.2,430.0 L1770.7,431.1 L1771.2,432.3 L1771.7,434.1 L1772.2,435.9 L1772.7,437.7 L1773.2,439.5 L1773.4,440.2 L1773.7,441.3 L1774.2,443.2 L1774.7,445.0 L1775.2,446.7 L1775.7,446.4 L1776.2,442.5 L1776.4,442.6 L1776.7,438.4 L1777.2,439.3 L1777.5,438.5 L1777.7,436.3 L1778.2,433.1 L1778.7,431.2 L1778.8,431.4 L1779.2,431.9 L1779.7,426.9 L1780.2,427.5 L1780.7,422.6 L1781.2,419.4 L1781.7,415.9 L1782.0,413.4 L1782.2,412.2 L1782.7,407.4 L1783.2,401.8 L1783.5,400.4 L1783.7,397.1 L1784.2,395.0 L1784.7,390.7 L1785.2,388.2 L1785.7,380.9 L1785.8,383.2 L1786.2,384.9 L1786.7,379.8 L1787.2,376.8 L1787.4,377.3 L1787.7,380.3 L1788.2,372.5 L1788.7,369.8 L1789.2,371.6 L1789.7,371.5 L1790.2,370.4 L1790.5,364.4 L1790.7,370.7 L1791.2,360.6 L1791.7,363.0 L1791.9,357.3 L1792.2,359.5 L1792.7,366.6 L1793.2,370.2 L1793.6,373.0 L1793.7,373.2 L1794.2,373.4 L1794.7,374.5 L1794.8,374.0 L1795.2,375.1 L1795.7,376.6 L1795.9,377.5 L1796.2,380.3 L1796.7,384.1 L1797.2,388.5 L1797.7,393.2 L1798.2,396.6 L1798.7,400.1 L1799.2,403.6 L1799.3,404.3 L1799.7,405.8 L1800.2,407.8 L1800.7,409.7 L1801.2,411.6 L1801.7,413.6 L1802.2,415.5 L1802.7,417.2 L1803.2,418.8 L1803.7,420.5 L1804.2,422.2 L1804.7,423.9 L1804.9,424.5 L1805.2,425.6 L1805.7,427.5 L1806.2,429.4 L1806.7,431.3 L1807.2,433.1 L1807.6,434.6 L1807.7,434.9 L1808.2,436.4 L1808.7,438.0 L1809.2,439.5 L1809.7,441.1 L1810.2,442.7 L1810.5,443.6 L1810.7,443.9 L1811.2,444.7 L1811.7,445.4 L1812.2,446.2 L1812.7,446.9 L1813.2,447.9 L1813.7,448.6 L1814.2,449.0 L1814.7,451.0 L1815.0,451.2 L1815.2,448.5 L1815.7,446.7 L1816.1,445.8 L1816.2,447.2 L1816.7,442.5 L1817.2,442.9 L1817.7,441.8 L1818.2,440.1 L1818.7,439.7 L1818.8,440.1 L1819.2,437.1 L1819.7,439.1 L1820.2,435.8 L1820.6,436.4 L1820.7,436.3 L1821.2,428.3 L1821.7,426.3 L1822.2,421.9 L1822.4,417.2 L1822.7,412.0 L1823.2,406.4 L1823.7,404.5 L1823.9,398.2 L1824.2,400.0 L1824.7,391.0 L1825.2,391.8 L1825.5,386.7 L1825.7,385.5 L1826.2,386.5 L1826.7,379.0 L1827.2,378.4 L1827.3,380.8 L1827.7,379.9 L1828.2,379.8 L1828.4,377.3 L1828.7,370.0 L1829.2,370.2 L1829.6,372.0 L1829.7,373.8 L1830.2,373.7 L1830.5,379.3 L1830.7,379.4 L1831.2,383.6 L1831.4,383.6 L1831.7,380.8 L1832.2,383.5 L1832.5,377.5 L1832.7,382.1 L1833.2,372.8 L1833.6,374.2 L1833.7,371.0 L1834.2,372.6 L1834.7,368.8 L1835.2,371.8 L1835.7,366.3 L1835.8,369.4 L1836.2,371.2 L1836.7,370.9 L1837.2,375.4 L1837.7,377.9 L1838.2,380.8 L1838.5,381.8 L1838.7,382.8 L1839.2,385.7 L1839.7,388.1 L1840.2,390.4 L1840.7,392.7 L1841.2,395.3 L1841.7,397.1 L1842.2,399.0 L1842.7,400.9 L1843.2,402.8 L1843.7,404.6 L1844.2,406.5 L1844.7,407.5 L1845.2,408.5 L1845.7,409.6 L1846.2,410.6 L1846.7,411.7 L1847.2,412.7 L1847.5,413.3 L1847.7,413.6 L1848.2,414.2 L1848.7,414.9 L1849.2,415.5 L1849.7,416.1 L1850.2,416.8 L1850.7,417.5 L1850.9,417.7 L1851.2,418.3 L1851.7,419.3 L1852.2,420.2 L1852.7,421.3 L1853.2,422.2 L1853.7,423.2 L1853.8,423.4 L1854.2,424.0 L1854.7,424.9 L1855.2,425.1 L1855.7,425.4 L1856.2,426.0 L1856.5,426.8 L1856.7,427.6 L1857.2,423.0 L1857.4,421.1 L1857.7,416.2 L1858.2,415.9 L1858.3,413.9 L1858.7,415.0 L1859.2,414.6 L1859.7,413.6 L1860.1,415.6 L1860.2,412.1 L1860.7,415.2 L1861.2,415.4 L1861.7,413.6 L1862.1,413.5 L1862.2,414.9 L1862.7,408.8 L1863.2,407.7 L1863.7,404.9 L1864.2,402.0 L1864.7,401.8 L1865.0,399.5 L1865.2,398.0 L1865.7,393.5 L1866.2,389.0 L1866.4,385.8 L1866.7,384.4 L1867.2,379.7 L1867.7,373.7 L1868.2,374.6 L1868.7,371.8 L1869.2,375.0 L1869.5,370.3 L1869.7,372.4 L1870.2,369.9 L1870.7,368.5 L1871.1,365.8 L1871.2,364.8 L1871.7,371.3 L1872.2,367.5 L1872.7,366.3 L1873.2,366.6 L1873.7,368.6 L1874.2,362.6 L1874.5,362.0 L1874.7,367.4 L1875.2,362.4 L1875.7,362.0 L1876.0,361.0 L1876.2,362.8 L1876.7,361.4 L1877.2,353.4 L1877.4,355.4 L1877.7,363.1 L1878.2,365.3 L1878.3,366.0 L1878.7,370.5 L1878.9,372.8 L1879.2,374.1 L1879.7,376.8 L1880.2,379.5 L1880.7,381.8 L1881.2,383.5 L1881.7,385.2 L1882.2,387.0 L1882.3,387.4 L1882.7,388.6 L1883.2,390.1 L1883.7,391.5 L1884.2,393.0 L1884.6,394.2 L1884.7,394.4 L1885.2,395.4 L1885.7,396.4 L1886.2,397.5 L1886.7,398.5 L1886.8,398.7 L1887.2,399.6 L1887.7,400.8 L1888.2,401.9 L1888.7,403.0 L1889.2,404.2 L1889.7,405.3 L1890.2,406.5 L1890.7,407.5 L1891.2,408.5 L1891.7,409.6 L1892.2,410.6 L1892.7,411.7 L1893.2,412.6 L1893.5,413.3 L1893.7,413.8 L1894.2,414.8 L1894.7,416.0 L1895.2,417.1 L1895.7,418.2 L1896.2,419.3 L1896.5,420.0 L1896.7,420.4 L1897.2,421.2 L1897.7,423.2 L1898.2,422.3 L1898.7,423.7 L1899.1,425.3 L1899.2,424.9 L1899.7,416.2 L1899.8,415.2 L1900.2,413.1 L1900.3,413.1 L1900.7,412.4 L1901.2,416.6 L1901.7,417.2 L1901.8,416.6" fill="none" stroke="#068C45" stroke-width="1.500" stroke-linejoin="round"/><g font-size="14.900" fill="#8a929c"><text x="679.5" y="489" text-anchor="middle">Oct 2</text><text x="762.0" y="489" text-anchor="middle">Oct 4</text><text x="844.6" y="489" text-anchor="middle">Oct 6</text><text x="927.1" y="489" text-anchor="middle">Oct 8</text><text x="1009.7" y="489" text-anchor="middle">Oct 10</text><text x="1092.2" y="489" text-anchor="middle">Oct 12</text><text x="1174.8" y="489" text-anchor="middle">Oct 14</text><text x="1257.3" y="489" text-anchor="middle">Oct 16</text><text x="1339.9" y="489" text-anchor="middle">Oct 18</text><text x="1422.4" y="489" text-anchor="middle">Oct 20</text><text x="1505.0" y="489" text-anchor="middle">Oct 22</text><text x="1587.5" y="489" text-anchor="middle">Oct 24</text><text x="1670.1" y="489" text-anchor="middle">Oct 26</text><text x="1752.6" y="489" text-anchor="middle">Oct 28</text><text x="1835.2" y="489" text-anchor="middle">Oct 30</text></g></svg>
<span class="t " style="font-size:13px;color:#068C45;font-family:DejaVu Sans,Liberation Sans,sans-serif;letter-spacing:-0.37px;left:615.8px;top:311.3px;">109</span>
<span class="t " style="font-size:13px;color:#068C45;font-family:DejaVu Sans,Liberation Sans,sans-serif;letter-spacing:-0.27px;left:623.5px;top:360.0px;">94</span>
<span class="t " style="font-size:13px;color:#068C45;font-family:DejaVu Sans,Liberation Sans,sans-serif;letter-spacing:-0.27px;left:623.5px;top:405.7px;">79</span>
<span class="t " style="font-size:13px;color:#068C45;font-family:DejaVu Sans,Liberation Sans,sans-serif;letter-spacing:-0.27px;left:623.5px;top:452.5px;">65</span>
<span class="t " style="font-size:15px;color:#068C45;font-family:DejaVu Sans,Liberation Sans,sans-serif;letter-spacing:-0.18px;left:1790.5px;top:319.7px;">Temperature</span>
<svg class="b" style="left:623.0px;top:502.0px;" width="14.0" height="15.8" viewBox="0 0 14 16" preserveAspectRatio="none"><path fill="#007960" d="M5.4,0 H8.6 V9.6 L12,6.2 L14,8.4 L7,16 L0,8.400 L2,6.200 L5.400,9.600z"/></svg>
<span class="t " style="font-size:14px;color:#007960;letter-spacing:-0.33px;left:646.6px;top:502.7px;">10/1/2018 4:42 AM</span>
<a class="t " style="font-size:14px;color:#007960;letter-spacing:-1.20px;left:762.5px;top:502.7px;">EDT</a>
<svg class="b" style="left:1109.0px;top:501.0px;" width="18.8" height="17.0" viewBox="0 0 19 16" preserveAspectRatio="none"><path fill="#007960" d="M9.6,0 V16 L0,8z M19,0 V16 L9.4,8z"/></svg>
<svg class="b" style="left:1145.4px;top:501.0px;" width="10.9" height="17.0" viewBox="0 0 11 16" preserveAspectRatio="none"><path fill="#007960" d="M11,0 V16 L0,8z"/></svg>
<span class="t " style="font-size:14px;color:#007960;letter-spacing:0.13px;left:1173.5px;top:502.7px;">1 month</span>
<svg class="b" style="left:1243.7px;top:501.0px;" width="11.0" height="17.0" viewBox="0 0 11 16" preserveAspectRatio="none"><path fill="#007960" d="M0,0 V16 L11,8z"/></svg>
<svg class="b" style="left:1271.3px;top:501.0px;" width="18.9" height="17.0" viewBox="0 0 19 16" preserveAspectRatio="none"><path fill="#007960" d="M0,0 V16 L9.6,8z M9.400,0 V16 L19,8z"/></svg>
<svg class="b" style="left:1307.0px;top:501.0px;" width="13.0" height="17.0" viewBox="0 0 13 16" preserveAspectRatio="none"><path fill="#007960" d="M0,0 V16 L10.6,8z M10.4,0 H13 V16 H10.4z"/></svg>
<svg class="b" style="left:1339.0px;top:502.5px;" width="13.6" height="14.3" viewBox="0 0 14 15" preserveAspectRatio="none"><g fill="none" stroke="#007960" stroke-width="2.2"><path d="M1.6,6.6 A5.6,5.6 0 0 1 11.4,3.600"/><path d="M12.4,8.4 A5.6,5.6 0 0 1 2.6,11.4"/></g><g fill="#007960"><path d="M13.6,0.400 V6 H8z"/><path d="M0.400,14.600 V9 H6z"/></g></svg>
<span class="t " style="font-size:14px;color:#007960;letter-spacing:-0.37px;left:1753.0px;top:502.7px;">10/31/2018 2:42 PM</span>
<a class="t " style="font-size:14px;color:#007960;letter-spacing:-1.23px;left:1876.5px;top:502.7px;">EDT</a>
<div class="b " style="left:614px;top:526px;width:1304px;height:79.5px;background:#f5f5f5;border-top:1px solid #ddd;"></div>
<div class="b " style="left:641px;top:535.6px;width:1231.5px;height:17px;background:#f5f5f5;border:2px solid #cbcbcb;border-radius:3px;"></div>
<div class="b " style="left:642px;top:535.6px;width:521px;height:17px;background:#fff;border:2px solid #007960;"></div>
<div class="b " style="left:640px;top:532.5px;width:6px;height:24.5px;background:#fff;border:2px solid #007960;border-radius:1px;"></div>
<div class="b " style="left:1158px;top:532.5px;width:6px;height:24.5px;background:#fff;border:2px solid #007960;border-radius:1px;"></div>
<div class="b " style="left:742px;top:552.6px;width:1px;height:4.4px;background:#bbb;"></div>
<span class="t " style="font-size:11.5px;color:#999;left:729.5px;top:559.6px;">Oct 7</span>
<div class="b " style="left:861px;top:552.6px;width:1px;height:4.4px;background:#bbb;"></div>
<span class="t " style="font-size:11.5px;color:#999;left:844.7px;top:559.6px;">Oct 14</span>
<div class="b " style="left:979px;top:552.6px;width:1px;height:4.4px;background:#bbb;"></div>
<span class="t " style="font-size:11.5px;color:#999;left:963.1px;top:559.6px;">Oct 21</span>
<div class="b " style="left:1097px;top:552.6px;width:1px;height:4.4px;background:#bbb;"></div>
<span class="t " style="font-size:11.5px;color:#999;left:1081.5px;top:559.6px;">Oct 28</span>
<div class="b " style="left:1216px;top:552.6px;width:1px;height:4.4px;background:#bbb;"></div>
<span class="t " style="font-size:11.5px;color:#999;left:1201.8px;top:559.6px;">Nov 4</span>
<div class="b " style="left:1334px;top:552.6px;width:1px;height:4.4px;background:#bbb;"></div>
<span class="t " style="font-size:11.5px;color:#999;left:1317.4px;top:559.6px;">Nov 11</span>
<div class="b " style="left:1453px;top:552.6px;width:1px;height:4.4px;background:#bbb;"></div>
<span class="t " style="font-size:11.5px;color:#999;left:1435.4px;top:559.6px;">Nov 18</span>
<div class="b " style="left:1571px;top:552.6px;width:1px;height:4.4px;background:#bbb;"></div>
<span class="t " style="font-size:11.5px;color:#999;left:1553.8px;top:559.6px;">Nov 25</span>
<div class="b " style="left:1689px;top:552.6px;width:1px;height:4.4px;background:#bbb;"></div>
<span class="t " style="font-size:11.5px;color:#999;left:1675.4px;top:559.6px;">Dec 2</span>
<div class="b " style="left:1808px;top:552.6px;width:1px;height:4.4px;background:#bbb;"></div>
<span class="t " style="font-size:11.5px;color:#999;left:1793.8px;top:559.6px;">Dec 9</span>
<svg class="b" style="left:1883.7px;top:536.3px;" width="16.1" height="17.2" viewBox="0 0 16 17" preserveAspectRatio="none"><rect x="0" y="0" width="7.4" height="17" fill="#007960"/><rect x="8.6" y="0" width="7.4" height="17" fill="#007960"/><path d="M.6,3 L2.6,11.6 L4.2,5 L5.600,14 L7,6 M9.200,3 L11.2,11.6 L12.800,5 L14.200,14 L15.600,6" stroke="#fff" stroke-width="1.7" fill="none"/></svg>
<svg class="b" style="left:623.0px;top:583.2px;" width="14.0" height="15.9" viewBox="0 0 14 16" preserveAspectRatio="none"><path fill="#007960" transform="translate(0,16) scale(1,-1)" d="M5.4,0 H8.6 V9.6 L12,6.2 L14,8.4 L7,16 L0,8.400 L2,6.200 L5.400,9.600z"/></svg>
<span class="t " style="font-size:14px;color:#007960;letter-spacing:-0.06px;left:646.6px;top:585.9px;">10/1/2018</span>
<span class="t " style="font-size:14px;color:#007960;letter-spacing:0.07px;left:1237.0px;top:585.9px;">2.4 months</span>
<span class="t " style="font-size:14px;color:#007960;letter-spacing:-0.05px;left:1827.8px;top:585.9px;">12/12/2018</span>
<div class="b " style="left:614px;top:606px;width:1304px;height:32px;background:#007960;"></div>
<svg class="b" style="left:626.3px;top:615.0px;" width="17.7" height="14.5" viewBox="0 0 18 15" preserveAspectRatio="none"><path d="M.8,0 V14.200 H18" stroke="#fff" stroke-width="1.6" fill="none"/><path fill="#fff" d="M3,12.600 V8.6 L7.2,3 L10.800,6.600 L13.600,4 L17,8.400 V12.600z"/></svg>
<span class="t " style="font-size:16px;color:#fff;letter-spacing:-0.46px;left:648.3px;top:614.8px;">Details</span>
<div class="b " style="left:1818px;top:609.4px;width:94.5px;height:26.4px;background:#fff;border-radius:3px;"></div>
<svg class="b" style="left:1826.0px;top:616.0px;" width="15.5" height="13.5" viewBox="0 0 16 14" preserveAspectRatio="none"><g fill="#333"><rect x="4.050000000000001" y="2.665" width="2.3" height="2.3" transform="rotate(0.0 5.2 7.6)"/><rect x="4.050000000000001" y="2.665" width="2.3" height="2.3" transform="rotate(45.0 5.2 7.6)"/><rect x="4.050000000000001" y="2.665" width="2.3" height="2.3" transform="rotate(90.0 5.2 7.6)"/><rect x="4.050000000000001" y="2.665" width="2.3" height="2.3" transform="rotate(135.0 5.2 7.6)"/><rect x="4.050000000000001" y="2.665" width="2.3" height="2.3" transform="rotate(180.0 5.2 7.6)"/><rect x="4.050000000000001" y="2.665" width="2.3" height="2.3" transform="rotate(225.0 5.2 7.6)"/><rect x="4.050000000000001" y="2.665" width="2.3" height="2.3" transform="rotate(270.0 5.2 7.6)"/><rect x="4.050000000000001" y="2.665" width="2.3" height="2.3" transform="rotate(315.0 5.2 7.6)"/><circle cx="5.2" cy="7.6" r="3.9"/><rect x="12.100000000000001" y="0.4700000000000001" width="1.4" height="1.4" transform="rotate(0.0 12.8 3.2)"/><rect x="12.100000000000001" y="0.4700000000000001" width="1.4" height="1.4" transform="rotate(60.0 12.8 3.2)"/><rect x="12.100000000000001" y="0.4700000000000001" width="1.4" height="1.4" transform="rotate(120.0 12.8 3.2)"/><rect x="12.100000000000001" y="0.4700000000000001" width="1.4" height="1.4" transform="rotate(180.0 12.8 3.2)"/><rect x="12.100000000000001" y="0.4700000000000001" width="1.4" height="1.4" transform="rotate(240.0 12.8 3.2)"/><rect x="12.100000000000001" y="0.4700000000000001" width="1.4" height="1.4" transform="rotate(300.0 12.8 3.2)"/><circle cx="12.8" cy="3.2" r="2.1"/><rect x="12.100000000000001" y="8.469999999999999" width="1.4" height="1.4" transform="rotate(0.0 12.8 11.2)"/><rect x="12.100000000000001" y="8.469999999999999" width="1.4" height="1.4" transform="rotate(60.0 12.8 11.2)"/><rect x="12.100000000000001" y="8.469999999999999" width="1.4" height="1.4" transform="rotate(120.0 12.8 11.2)"/><rect x="12.100000000000001" y="8.469999999999999" width="1.4" height="1.4" transform="rotate(180.0 12.8 11.2)"/><rect x="12.100000000000001" y="8.469999999999999" width="1.4" height="1.4" transform="rotate(240.0 12.8 11.2)"/><rect x="12.100000000000001" y="8.469999999999999" width="1.4" height="1.4" transform="rotate(300.0 12.8 11.2)"/><circle cx="12.8" cy="11.2" r="2.1"/></g><g fill="#fff"><circle cx="5.2" cy="7.6" r="1.7"/><circle cx="12.8" cy="3.2" r=".9"/><circle cx="12.8" cy="11.2" r=".9"/></g></svg>
<span class="t " style="font-size:13.5px;color:#333;letter-spacing:-0.49px;left:1845.6px;top:616.1px;">Customize</span>
<div class="b " style="left:614px;top:638px;width:1304px;height:35px;background:#fff;border-bottom:2px solid #e0e0e0;"></div>
<svg class="b" style="left:707.9px;top:652.0px;" width="11.1" height="11.0" viewBox="0 0 11 11" preserveAspectRatio="none"><path d="M1.2,1.2 L9.8,9.8 M9.800,1.2 L1.200,9.800" stroke="#666" stroke-width="3.1" stroke-linecap="butt"/></svg>
<svg class="b" style="left:732.6px;top:651.0px;" width="12.4" height="12.4" viewBox="0 0 13 13" preserveAspectRatio="none"><rect x=".75" y=".75" width="11.5" height="11.5" rx="2.4" fill="#fff" stroke="#333" stroke-width="1.3"/></svg>
<svg class="b" style="left:793.4px;top:650.5px;" width="9.6" height="13.5" viewBox="0 0 10 13" preserveAspectRatio="none"><path fill="#8a8a8a" d="M5,0 L10,5.400 H0z"/><path fill="#8a8a8a" d="M5,13 L10,7.600 H0z"/></svg>
<span class="t " style="font-size:15px;color:#222;letter-spacing:0.10px;left:811.8px;top:649.8px;">Name</span>
<svg class="b" style="left:861.7px;top:650.5px;" width="10.3" height="13.5" viewBox="0 0 10 13" preserveAspectRatio="none"><path fill="#8a8a8a" d="M5,0 L10,5.400 H0z"/><path fill="#8a8a8a" d="M5,13 L10,7.600 H0z"/></svg>
<span class="t " style="font-size:15px;color:#222;letter-spacing:-0.24px;left:1649.3px;top:649.8px;">Assets</span>
<span class="t " style="font-size:15px;color:#007960;letter-spacing:-0.07px;left:1702.2px;top:649.8px;">Lane</span>
<svg class="b" style="left:1744.700px;top:651.600px" width="9.800" height="5.100" viewBox="0 0 10 5"><path fill="#007960" d="M0,5 H10 L5,0z"/></svg>
<span class="t " style="font-size:15px;color:#222;letter-spacing:-0.19px;left:1762.6px;top:649.8px;">Avg</span>
<svg class="b" style="left:1797.5px;top:650.5px;" width="9.3" height="13.5" viewBox="0 0 10 13" preserveAspectRatio="none"><path fill="#8a8a8a" d="M5,0 L10,5.400 H0z"/><path fill="#8a8a8a" d="M5,13 L10,7.600 H0z"/></svg>
<svg class="b" style="left:1889.6px;top:646.2px;" width="17.9" height="15.5" viewBox="0 0 18 16" preserveAspectRatio="none"><rect x=".6" y=".6" width="12.800" height="11" fill="none" stroke="#333" stroke-width="1.200"/><path d="M.6,3.400 H13.400 M.6,6.200 H13.400 M.6,9 H13.400 M4.800,.6 V11.600 M9,.6 V11.600" stroke="#333" stroke-width=".9"/><circle cx="12.600" cy="10.800" r="5.200" fill="#333" stroke="#fff" stroke-width="1"/><path d="M9.800,10.800 H15.400 M12.600,8 V13.600" stroke="#fff" stroke-width="1.700"/></svg>
<div class="b " style="left:614px;top:673px;width:1304px;height:27.5px;background:#f9f9f9;border-bottom:1px solid #ddd;"></div>
<div class="b " style="left:614px;top:700.5px;width:1304px;height:28px;background:#fff;"></div>
<svg class="b" style="left:652.2px;top:678.5px;" width="15.3" height="15.0" viewBox="0 0 16 16" preserveAspectRatio="none"><path fill="#007960" d="M16,0 C16,5 14,8.400 10.600,11 L10.200,15 L7.400,16 L7,12.800 L3.200,9 L0,8.600 L1,5.800 L5,5.400 C7.600,2 11,0 16,0z"/><path fill="#007960" d="M3.400,11 L5,12.600 C4.400,14 3,14.800 1,15 C1.200,13 2,11.600 3.400,11z"/><circle cx="11.8" cy="4.2" r="1.3" fill="#f9f9f9"/></svg>
<svg class="b" style="left:682.8px;top:679.0px;" width="13.6" height="13.6" viewBox="0 0 14 14" preserveAspectRatio="none"><circle cx="7" cy="7" r="7" fill="#007960"/><g fill="#f9f9f9"><rect x="5.8" y="2.400" width="3" height="2.200" rx=".4"/><path d="M4.800,5.800 H8.400 V10 H9.400 V11.600 H4.800 V10 H5.800 V7.400 H4.800z"/></g></svg>
<svg class="b" style="left:707.9px;top:680.5px;" width="11.1" height="11.0" viewBox="0 0 11 11" preserveAspectRatio="none"><path d="M1.2,1.2 L9.8,9.8 M9.800,1.2 L1.200,9.800" stroke="#007960" stroke-width="3.1" stroke-linecap="butt"/></svg>
<svg class="b" style="left:732.6px;top:679.5px;" width="12.4" height="12.4" viewBox="0 0 13 13" preserveAspectRatio="none"><rect x=".75" y=".75" width="11.5" height="11.5" rx="2.4" fill="#fff" stroke="#333" stroke-width="1.3"/></svg>
<svg class="b" style="left:652.2px;top:706.6px;" width="15.3" height="15.0" viewBox="0 0 16 16" preserveAspectRatio="none"><path fill="#007960" d="M16,0 C16,5 14,8.400 10.600,11 L10.200,15 L7.400,16 L7,12.800 L3.200,9 L0,8.600 L1,5.800 L5,5.400 C7.600,2 11,0 16,0z"/><path fill="#007960" d="M3.400,11 L5,12.600 C4.400,14 3,14.800 1,15 C1.200,13 2,11.600 3.400,11z"/><circle cx="11.8" cy="4.2" r="1.3" fill="#fff"/></svg>
<svg class="b" style="left:682.8px;top:707.1px;" width="13.6" height="13.6" viewBox="0 0 14 14" preserveAspectRatio="none"><circle cx="7" cy="7" r="7" fill="#007960"/><g fill="#fff"><rect x="5.8" y="2.400" width="3" height="2.200" rx=".4"/><path d="M4.800,5.800 H8.400 V10 H9.400 V11.600 H4.800 V10 H5.800 V7.400 H4.800z"/></g></svg>
<svg class="b" style="left:707.9px;top:708.6px;" width="11.1" height="11.0" viewBox="0 0 11 11" preserveAspectRatio="none"><path d="M1.2,1.2 L9.8,9.8 M9.800,1.2 L1.200,9.800" stroke="#007960" stroke-width="3.1" stroke-linecap="butt"/></svg>
<svg class="b" style="left:732.6px;top:707.6px;" width="12.4" height="12.4" viewBox="0 0 13 13" preserveAspectRatio="none"><rect x=".75" y=".75" width="11.5" height="11.5" rx="2.4" fill="#fff" stroke="#333" stroke-width="1.3"/></svg>
<svg class="b" style="left:760.7px;top:676.5px;" width="18.4" height="16.0" viewBox="0 0 18 16" preserveAspectRatio="none"><path d="M1,10.600 L4.400,1.600 L8.600,12.600 L11.400,6.400 L14,14.400 L17,9" stroke="#068C45" stroke-width="2.2" fill="none" stroke-linejoin="miter"/></svg>
<span class="t " style="font-size:14.5px;color:#333;letter-spacing:-0.98px;left:787.6px;top:679.2px;">°F</span>
<span class="t " style="font-size:15px;color:#222;letter-spacing:0.48px;left:811.8px;top:678.8px;">Temperature</span>
<a class="t " style="font-size:15px;color:#007960;letter-spacing:-0.42px;left:1649.3px;top:678.8px;">Area A</a>
<span class="t " style="font-size:14px;color:#333;left:1744.5px;top:679.6px;">1</span>
<span class="t " style="font-size:14px;color:#333;letter-spacing:0.13px;left:1767.6px;top:679.6px;">85.37</span>
<svg class="b" style="left:619.0px;top:707.5px;" width="16.0" height="13.0" viewBox="0 0 16 13" preserveAspectRatio="none"><path d="M11.400,8.400 V10.800 a1.600,1.600 0 0 1 -1.600,1.600 H2.200 A1.600,1.600 0 0 1 .6,10.800 V3.400 A1.600,1.600 0 0 1 2.200,1.800 H9.600" fill="none" stroke="#007960" stroke-width="1.200"/><path fill="#007960" d="M5.400,7.400 L11.800,1 L14,3.200 L7.600,9.600 L5,10z M12.400,.4 L13.200,-.4 a.8,.8 0 0 1 1,0 L15.400,.8 a.8,.8 0 0 1 0,1 L14.600,2.600z"/></svg>
<svg class="b" style="left:761.3px;top:703.5px;" width="17.8" height="17.1" viewBox="0 0 18 17" preserveAspectRatio="none"><path d="M1,0 V16 H18" stroke="#4055A3" stroke-width="1.700" fill="none"/><g fill="#4055A3"><rect x="3.800" y="8" width="3.200" height="6.600"/><rect x="8.400" y="2.400" width="3.200" height="12.200"/><rect x="13" y="6" width="3.200" height="8.600"/></g></svg>
<span class="t " style="font-size:15px;color:#222;letter-spacing:-0.08px;left:811.8px;top:706.9px;">Temp-avg FFT</span>
<a class="t " style="font-size:15px;color:#007960;letter-spacing:-0.42px;left:1649.3px;top:706.9px;">Area A</a>
</main>
</body></html>
